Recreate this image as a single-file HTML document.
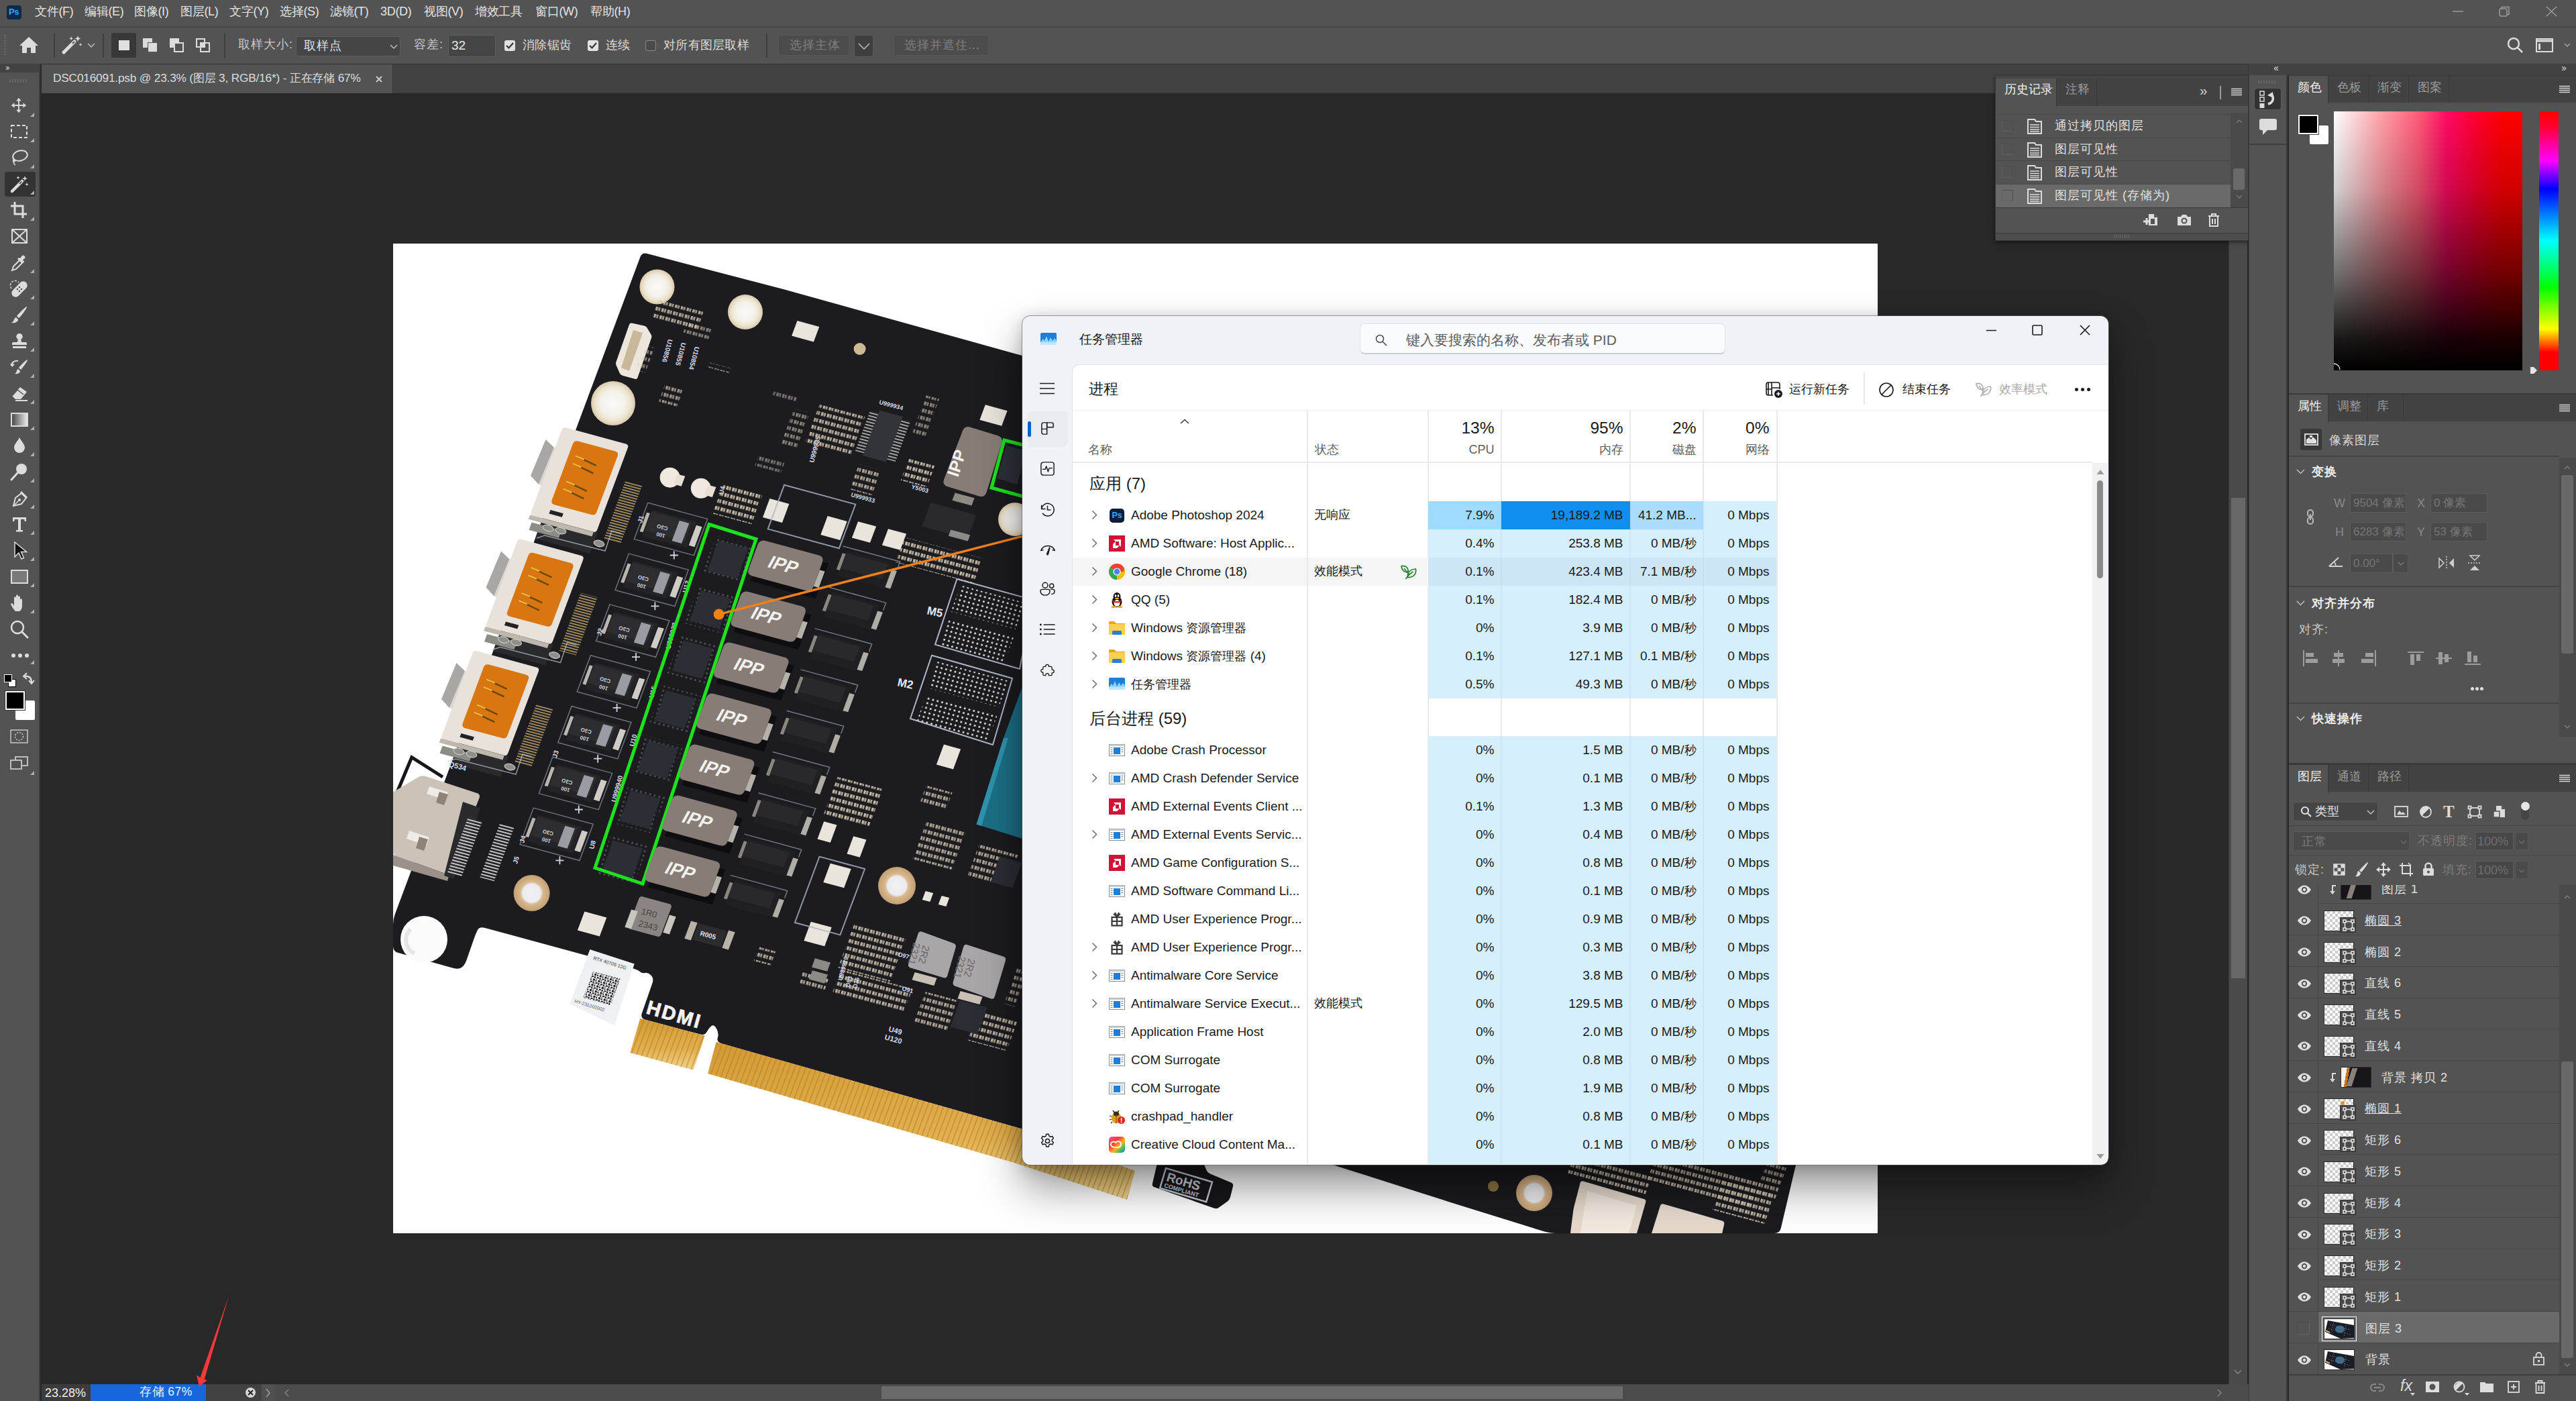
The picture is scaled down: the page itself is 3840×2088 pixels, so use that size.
<!DOCTYPE html><html><head><meta charset="utf-8"><title>Photoshop</title><style>
*{box-sizing:border-box;margin:0;padding:0}
html,body{width:3840px;height:2088px;overflow:hidden;background:#282828}
body{font-family:"Liberation Sans",sans-serif;color:#d8d8d8;position:relative;font-size:18px}
.abs{position:absolute}
svg{position:absolute;overflow:visible}
.t{position:absolute;white-space:nowrap;line-height:1}
/* PS chrome */
#menubar{left:0;top:0;width:3840px;height:41px;background:#535353;border-bottom:1.500px solid #333}
#menubar .t{top:8px;font-size:18px;color:#e4e4e4;letter-spacing:-.3px}
#optbar{left:0;top:41px;width:3840px;height:54.500px;background:#535353;border-top:1px solid #5b5b5b;border-bottom:1.500px solid #343434}
#tabstrip{left:62px;top:95.500px;width:3290px;height:43px;background:#424242;border-bottom:1px solid #383838}
#doctab{left:62px;top:95.500px;width:524px;height:43px;background:#535353;border-right:1px solid #383838}
#doctab .t{left:17px;top:12px;font-size:17.300px;color:#dcdcdc;letter-spacing:-.2px}
#toolbar{left:0;top:95px;width:60px;height:1993px;background:#535353;border-right:2px solid #3e3e3e}
#toolhead{left:0;top:95px;width:58px;height:13px;background:#424242}
#statusbar{left:62px;top:2063px;width:3260px;height:25px;background:#4b4b4b}
#vscroll{left:3322px;top:137px;width:28px;height:1926px;background:#4a4a4a;border-left:1px solid #3a3a3a}

.ptab{position:absolute;font-size:17.500px;line-height:1;white-space:nowrap}
.phead{position:absolute;background:#424242}
.pbody{position:absolute;background:#535353}
.dim{color:#9a9a9a}
.lrow{position:absolute;left:3412px;width:403px;height:46.750px;border-bottom:1px solid #454545}
.lname{position:absolute;left:113px;top:15.500px;font-size:18px;color:#e0e0e0;white-space:nowrap;letter-spacing:1px;line-height:1}
.thumb{position:absolute;left:52px;top:9.500px;width:45px;height:31px;border:1px solid #2c2c2c;background-color:#fff;background-image:linear-gradient(45deg,#ccc 25%,transparent 25%,transparent 75%,#ccc 75%),linear-gradient(45deg,#ccc 25%,transparent 25%,transparent 75%,#ccc 75%);background-size:8px 8px;background-position:0 0,4px 4px}
.vbadge{position:absolute;left:76px;top:19.500px;width:24px;height:23px;background:#4a4a4a;border:1px solid #333}

#tm{position:absolute;left:1524px;top:471px;width:1619px;height:1265px;background:#eff3f8;border-radius:12px;box-shadow:0 0 0 1px rgba(90,90,90,.55),0 34px 64px rgba(0,0,0,.42),0 4px 24px rgba(0,0,0,.2);overflow:hidden;color:#1a1a1a}
#tm .t{color:#1a1a1a}
#tmc{position:absolute;left:74px;top:72px;width:1544px;height:1192px;background:#fff;border-top-left-radius:11px;border-left:1px solid #e3e6ea;border-top:1px solid #e3e6ea;overflow:hidden}
.vl{position:absolute;top:68px;width:2px;height:1130px;background:#e9e9e9}
.cell{position:absolute;height:42px}
.num{position:absolute;font-size:19px;line-height:41px;white-space:nowrap;text-align:right;color:#1a1a1a}
.nm{position:absolute;left:87px;font-size:19px;line-height:41px;white-space:nowrap;color:#1a1a1a}
.st{position:absolute;left:360px;font-size:19px;line-height:41px;white-space:nowrap;color:#1a1a1a}
.chev{position:absolute;left:28px}
</style></head><body><div class="abs" style="left:586px;top:363px;width:2213px;height:1475px;background:#fff"></div><svg style="left:586px;top:363px" width="2213" height="1475" viewBox="586 363 2213 1475"><defs><clipPath id="cv"><rect x="586" y="363" width="2213" height="1475"/></clipPath><linearGradient id="gold" x1="0" y1="0" x2="0" y2="1"><stop offset="0" stop-color="#d39a35"/><stop offset="0.6" stop-color="#e3b04e"/><stop offset="1" stop-color="#efd58e"/></linearGradient><radialGradient id="hole"><stop offset="0" stop-color="#fbfaf8"/><stop offset="0.55" stop-color="#f4f1ea"/><stop offset="0.8" stop-color="#ece3cf"/><stop offset="1" stop-color="#d8c9a6"/></radialGradient><radialGradient id="hole2"><stop offset="0" stop-color="#f2f2f5"/><stop offset="0.5" stop-color="#ececf0"/><stop offset="0.62" stop-color="#d9b98f"/><stop offset="1" stop-color="#c39f72"/></radialGradient><pattern id="dots" width="7" height="7" patternUnits="userSpaceOnUse" patternTransform="rotate(15)"><circle cx="3.5" cy="3.5" r="1.5" fill="#e8e8ee"/></pattern><pattern id="pads" width="9" height="11" patternUnits="userSpaceOnUse" patternTransform="rotate(15)"><rect x="1" y="1" width="3.400" height="5.500" fill="#d9cdb8"/><rect x="5.300" y="1" width="2.600" height="5.500" fill="#cbbfa8"/></pattern><pattern id="fing" width="7.6" height="10" patternUnits="userSpaceOnUse" patternTransform="rotate(20.400)"><rect x="0" y="0" width="1.600" height="10" fill="#a9741f" opacity=".5"/></pattern><pattern id="qr" width="8" height="8" patternUnits="userSpaceOnUse" patternTransform="rotate(17)"><rect width="8" height="8" fill="#f2f2f4"/><rect x="0" y="0" width="3" height="3" fill="#1c1c1c"/><rect x="4" y="1" width="2" height="2" fill="#1c1c1c"/><rect x="1" y="4" width="2" height="3" fill="#1c1c1c"/><rect x="5" y="4" width="3" height="2" fill="#1c1c1c"/><rect x="4" y="6.500" width="1.500" height="1.500" fill="#1c1c1c"/></pattern><pattern id="pins" width="4" height="4" patternUnits="userSpaceOnUse" patternTransform="rotate(15)"><rect x="0" y="0" width="4" height="1.6" fill="#b9a06a"/></pattern><pattern id="pinsw" width="4.6" height="4.6" patternUnits="userSpaceOnUse" patternTransform="rotate(15)"><rect x="0" y="0" width="4.6" height="2" fill="#c8c8cc"/></pattern><linearGradient id="shd" x1="0" y1="0" x2="0" y2="1"><stop offset="0" stop-color="#a9a9a9"/><stop offset="0.35" stop-color="#d6d6d6"/><stop offset="1" stop-color="#ffffff"/></linearGradient></defs><g clip-path="url(#cv)"><path d="M954.2,383.5 Q957.0,376.0 964.7,378.0 L1152.3,427.0 Q1160.0,429.0 1167.7,431.1 L1516.3,527.9 Q1524.0,530.0 1531.7,532.1 L2791.3,877.9 Q2799.0,880.0 2799.0,888.0 L2799.0,1392.0 Q2799.0,1400.0 2796.3,1407.5 L2679.7,1728.5 Q2677.0,1736.0 2675.2,1743.8 L2654.8,1830.2 Q2653.0,1838.0 2645.0,1838.0 L2318.0,1838.0 Q2310.0,1838.0 2302.4,1835.6 L2157.6,1790.4 Q2150.0,1788.0 2142.4,1785.6 L1994.6,1738.4 Q1987.0,1736.0 1979.6,1732.9 L1907.4,1703.1 Q1900.0,1700.0 1892.1,1701.2 L1699.9,1729.8 Q1692.0,1731.0 1684.3,1728.8 L1532.7,1685.2 Q1525.0,1683.0 1517.3,1680.8 L1075.5,1555.2 Q1067.8,1553.0 1069.9,1546.5 L1069.9,1546.5 Q1072.0,1540.0 1068.0,1533.1 L1068.0,1532.9 Q1064.0,1526.0 1060.0,1529.5 L1060.0,1529.5 Q1056.0,1533.0 1053.3,1538.2 L1053.3,1538.2 Q1050.7,1543.4 1043.0,1541.3 L962.0,1519.8 Q954.3,1517.7 956.9,1510.1 L972.4,1465.6 Q975.0,1458.0 970.5,1453.5 L970.5,1453.5 Q966.0,1449.0 961.5,1450.0 L961.5,1450.0 Q957.0,1451.0 954.5,1448.5 L954.5,1448.5 Q952.0,1446.0 944.5,1443.5 L944.5,1443.5 Q937.0,1441.0 929.3,1438.9 L722.2,1382.8 Q714.5,1380.7 711.8,1386.3 L711.8,1386.3 Q709.0,1392.0 706.4,1399.6 L695.6,1430.4 Q693.0,1438.0 688.5,1441.5 L688.5,1441.5 Q684.0,1445.0 676.3,1442.9 L593.7,1420.1 Q586.0,1418.0 586.0,1410.0 L586.0,1378.0 Q586.0,1370.0 588.8,1362.5 Z" fill="#1b1b20" /><clipPath id="pc"><path d="M954.2,383.5 Q957.0,376.0 964.7,378.0 L1152.3,427.0 Q1160.0,429.0 1167.7,431.1 L1516.3,527.9 Q1524.0,530.0 1531.7,532.1 L2791.3,877.9 Q2799.0,880.0 2799.0,888.0 L2799.0,1392.0 Q2799.0,1400.0 2796.3,1407.5 L2679.7,1728.5 Q2677.0,1736.0 2675.2,1743.8 L2654.8,1830.2 Q2653.0,1838.0 2645.0,1838.0 L2318.0,1838.0 Q2310.0,1838.0 2302.4,1835.6 L2157.6,1790.4 Q2150.0,1788.0 2142.4,1785.6 L1994.6,1738.4 Q1987.0,1736.0 1979.6,1732.9 L1907.4,1703.1 Q1900.0,1700.0 1892.1,1701.2 L1699.9,1729.8 Q1692.0,1731.0 1684.3,1728.8 L1532.7,1685.2 Q1525.0,1683.0 1517.3,1680.8 L1075.5,1555.2 Q1067.8,1553.0 1069.9,1546.5 L1069.9,1546.5 Q1072.0,1540.0 1068.0,1533.1 L1068.0,1532.9 Q1064.0,1526.0 1060.0,1529.5 L1060.0,1529.5 Q1056.0,1533.0 1053.3,1538.2 L1053.3,1538.2 Q1050.7,1543.4 1043.0,1541.3 L962.0,1519.8 Q954.3,1517.7 956.9,1510.1 L972.4,1465.6 Q975.0,1458.0 970.5,1453.5 L970.5,1453.5 Q966.0,1449.0 961.5,1450.0 L961.5,1450.0 Q957.0,1451.0 954.5,1448.5 L954.5,1448.5 Q952.0,1446.0 944.5,1443.5 L944.5,1443.5 Q937.0,1441.0 929.3,1438.9 L722.2,1382.8 Q714.5,1380.7 711.8,1386.3 L711.8,1386.3 Q709.0,1392.0 706.4,1399.6 L695.6,1430.4 Q693.0,1438.0 688.5,1441.5 L688.5,1441.5 Q684.0,1445.0 676.3,1442.9 L593.7,1420.1 Q586.0,1418.0 586.0,1410.0 L586.0,1378.0 Q586.0,1370.0 588.8,1362.5 Z"  /></clipPath><polygon points="1067.8,1553.0 1525.0,1683.0 1692.0,1745.0 1680.0,1788.0 1512.0,1733.0 1055.0,1600.0" fill="url(#gold)" /><polygon points="1067.8,1553.0 1525.0,1683.0 1692.0,1745.0 1680.0,1788.0 1512.0,1733.0 1055.0,1600.0" fill="url(#fing)" /><polygon points="954.3,1517.7 1050.7,1543.4 1033.5,1594.8 939.3,1569.0" fill="url(#gold)" /><polygon points="954.3,1517.7 1050.7,1543.4 1033.5,1594.8 939.3,1569.0" fill="url(#fing)" /><path d="M1724.9,1733.9 Q1725.8,1730.0 1729.8,1730.0 L1788.7,1730.0 Q1792.7,1730.0 1794.2,1733.7 L1798.5,1744.1 Q1800.0,1747.8 1803.7,1749.3 L1835.3,1762.5 Q1839.0,1764.0 1838.0,1767.9 L1834.0,1784.1 Q1833.0,1788.0 1829.8,1790.4 L1817.2,1799.6 Q1814.0,1802.0 1810.2,1800.7 L1720.8,1769.3 Q1717.0,1768.0 1717.9,1764.1 Z" fill="#17171a" /><g transform="translate(1738,1741) rotate(16.600)"><rect x="0" y="0" width="72" height="31" fill="none" stroke="#c9ccd6" stroke-width="2.5"/><text x="5" y="18" font-family="Liberation Sans" font-weight="bold" font-size="19" fill="#c9ccd6">RoHS</text><text x="5" y="28" font-family="Liberation Sans" font-weight="bold" font-size="9" fill="#c9ccd6">COMPLIANT</text></g><path d="M586,1195 L613.800,1128.600 L660,1158" fill="none" stroke="#17171a" stroke-width="5"/><circle cx="979.5" cy="427.5" r="26" fill="url(#hole)"/><circle cx="1111" cy="465" r="26" fill="url(#hole)"/><circle cx="914" cy="601" r="33" fill="url(#hole)"/><circle cx="792.600" cy="1331" r="27" fill="url(#hole2)"/><circle cx="1337" cy="1320" r="28" fill="url(#hole2)"/><circle cx="1513" cy="774" r="25" fill="url(#hole)"/><circle cx="632" cy="1400" r="35" fill="#fbfbfb"/><path d="M612,1385 a22 22 0 0 0 6 36" stroke="#e6e6e6" stroke-width="6" fill="none"/><circle cx="2287" cy="1778" r="27" fill="url(#hole2)"/><circle cx="2226" cy="1768" r="8" fill="#8a7440"/><circle cx="1281.600" cy="520" r="9" fill="#cbb994"/><path d="M938.0,483.8 Q939.0,481.0 941.9,481.6 L960.1,485.4 Q963.0,486.0 964.5,488.6 L970.5,498.4 Q972.0,501.0 971.0,503.8 L950.5,562.8 Q949.5,565.6 946.6,564.8 L927.9,559.8 Q925.0,559.0 923.8,556.3 L918.7,544.7 Q917.5,542.0 918.5,539.2 Z" fill="#ece6dc" /><polygon points="944.0,492.0 958.0,496.0 938.0,553.0 926.0,548.0" fill="#c9b79a" /><polygon points="981.4,446.8 1049.0,465.1 1038.6,493.2 971.0,474.9" fill="url(#pads)" opacity="0.8"/><polygon points="1023.5,480.3 1062.1,490.7 1056.5,505.7 1017.9,495.3" fill="url(#pads)" opacity="0.6"/><polygon points="991.0,574.2 1018.1,581.5 1009.0,605.8 981.9,598.5" fill="url(#pads)" opacity="0.7"/><polygon points="962.2,514.4 975.7,518.1 961.8,555.6 948.3,551.9" fill="url(#pads)" opacity="0.6"/><polygon points="1057.0,539.8 1089.8,548.7 1087.0,556.2 1054.2,547.3" fill="url(#pads)" opacity="0.6"/><text x="996" y="505" transform="rotate(105 996 505)" font-family="Liberation Sans" font-weight="bold" font-size="10" fill="#d6dbe6">U10856</text><text x="1016" y="510" transform="rotate(105 1016 510)" font-family="Liberation Sans" font-weight="bold" font-size="10" fill="#d6dbe6">U10855</text><text x="1036" y="516" transform="rotate(105 1036 516)" font-family="Liberation Sans" font-weight="bold" font-size="10" fill="#d6dbe6">U10854</text><polygon points="1188.5,478.1 1221.3,487.0 1212.9,509.5 1180.1,500.6" fill="#e9e4dc" /><polygon points="1468.8,603.3 1501.6,612.2 1493.2,634.7 1460.4,625.8" fill="#e9e4dc" /><polygon points="1147.4,743.0 1176.4,750.9 1166.0,779.0 1137.0,771.1" fill="#e9e4dc" /><polygon points="1233.7,769.0 1262.7,776.9 1252.3,805.0 1223.3,797.1" fill="#e9e4dc" /><polygon points="1279.0,777.2 1306.1,784.5 1297.0,808.8 1269.9,801.5" fill="#e9e4dc" /><polygon points="1324.0,788.2 1351.1,795.5 1342.0,819.8 1314.9,812.5" fill="#e9e4dc" /><polygon points="871.4,1358.5 904.3,1367.4 893.8,1395.5 860.9,1386.6" fill="#e9e4dc" /><polygon points="1407.0,1109.6 1432.1,1116.4 1421.0,1146.4 1395.9,1139.6" fill="#e9e4dc" /><polygon points="1228.2,1224.3 1247.5,1229.5 1237.8,1255.7 1218.5,1250.5" fill="#e9e4dc" /><polygon points="1272.2,1246.3 1291.5,1251.5 1281.8,1277.7 1262.5,1272.5" fill="#e9e4dc" /><polygon points="1237.8,1286.8 1268.7,1295.1 1258.2,1323.2 1227.3,1314.9" fill="#e9e4dc" /><polygon points="1208.8,1373.8 1239.7,1382.1 1229.2,1410.2 1198.3,1401.9" fill="#e9e4dc" /><polygon points="1379.6,1327.9 1391.2,1331.0 1386.4,1344.1 1374.8,1341.0" fill="#e9e4dc" /><polygon points="1403.6,1334.9 1415.2,1338.0 1410.4,1351.1 1398.8,1348.0" fill="#e9e4dc" /><circle cx="998.7" cy="711.7" r="15" fill="#efe9df"/><polygon points="1009.7,706.6 1021.3,709.8 1015.7,724.8 1004.1,721.6" fill="#e6dfd2" /><circle cx="1044.8" cy="727.8" r="15" fill="#efe9df"/><polygon points="1055.8,722.7 1067.4,725.9 1061.8,740.9 1050.2,737.7" fill="#e6dfd2" /><polygon points="788.8,765.3 891.2,793.1 879.4,824.9 777.0,797.2" fill="#2a2a2d" clip-path="url(#pc)"/><polygon points="792.6,778.5 837.1,790.6 832.9,801.8 788.5,789.8" fill="#8d8d88" /><polygon points="932.2,717.0 957.3,723.8 925.2,810.0 900.1,803.2" fill="url(#pins)" /><polygon points="813.5,655.0 826.0,667.0 803.0,722.0 791.0,709.0" fill="#a9a6a3" /><polygon points="826.0,667.0 842.0,672.0 820.0,728.0 803.0,722.0" fill="#d9d6d2" /><path d="M837.3,640.7 Q839.0,636.0 843.8,637.3 L932.7,661.4 Q937.5,662.7 935.8,667.4 L890.4,789.2 Q888.7,793.9 883.8,792.6 L795.0,768.5 Q790.1,767.2 791.9,762.5 Z" fill="#e8e2da" /><polygon points="790.1,767.2 884.8,792.9 882.4,799.4 787.7,773.7" fill="#bdb7ae" /><path d="M853.9,661.6 Q856.0,656.0 861.8,657.6 L916.9,672.5 Q922.7,674.1 920.6,679.7 L889.5,763.1 Q887.4,768.7 881.6,767.1 L826.5,752.2 Q820.8,750.6 822.8,745.0 Z" fill="#d9760f" /><path d="M857.9,679.4 l30.8,14.5" stroke="#6a4a12" stroke-width="2.5"/><path d="M857.9,679.4 l12.8,5.5" stroke="#f0b637" stroke-width="2.5"/><path d="M853.7,690.8 l30.8,14.5" stroke="#6a4a12" stroke-width="2.5"/><path d="M853.7,690.8 l12.8,5.5" stroke="#f0b637" stroke-width="2.5"/><path d="M843.8,717.3 l30.8,14.5" stroke="#6a4a12" stroke-width="2.5"/><path d="M843.8,717.3 l12.8,5.5" stroke="#f0b637" stroke-width="2.5"/><path d="M839.6,728.7 l30.8,14.5" stroke="#6a4a12" stroke-width="2.5"/><path d="M839.6,728.7 l12.8,5.5" stroke="#f0b637" stroke-width="2.5"/><polygon points="820.5,759.9 839.8,765.2 837.7,770.8 818.4,765.6" fill="#222" /><polygon points="722.3,931.8 824.7,959.6 812.9,991.4 710.5,963.7" fill="#2a2a2d" clip-path="url(#pc)"/><polygon points="726.1,945.0 770.6,957.1 766.4,968.3 722.0,956.3" fill="#8d8d88" /><polygon points="865.7,883.5 890.8,890.3 858.7,976.5 833.6,969.7" fill="url(#pins)" /><polygon points="747.0,821.5 759.5,833.5 736.5,888.5 724.5,875.5" fill="#a9a6a3" /><polygon points="759.5,833.5 775.5,838.5 753.5,894.5 736.5,888.5" fill="#d9d6d2" /><path d="M770.8,807.2 Q772.5,802.5 777.3,803.8 L866.2,827.9 Q871.0,829.2 869.3,833.9 L823.9,955.7 Q822.2,960.4 817.3,959.1 L728.5,935.0 Q723.6,933.7 725.4,929.0 Z" fill="#e8e2da" /><polygon points="723.6,933.7 818.3,959.4 815.9,965.9 721.2,940.2" fill="#bdb7ae" /><path d="M787.4,828.1 Q789.5,822.5 795.3,824.1 L850.4,839.0 Q856.2,840.6 854.1,846.2 L823.0,929.6 Q820.9,935.2 815.1,933.6 L760.0,918.7 Q754.3,917.1 756.3,911.5 Z" fill="#d9760f" /><path d="M791.4,845.9 l30.8,14.5" stroke="#6a4a12" stroke-width="2.5"/><path d="M791.4,845.9 l12.8,5.5" stroke="#f0b637" stroke-width="2.5"/><path d="M787.2,857.3 l30.8,14.5" stroke="#6a4a12" stroke-width="2.5"/><path d="M787.2,857.3 l12.8,5.5" stroke="#f0b637" stroke-width="2.5"/><path d="M777.3,883.8 l30.8,14.5" stroke="#6a4a12" stroke-width="2.5"/><path d="M777.3,883.8 l12.8,5.5" stroke="#f0b637" stroke-width="2.5"/><path d="M773.1,895.2 l30.8,14.5" stroke="#6a4a12" stroke-width="2.5"/><path d="M773.1,895.2 l12.8,5.5" stroke="#f0b637" stroke-width="2.5"/><polygon points="754.0,926.4 773.3,931.7 771.2,937.3 751.9,932.1" fill="#222" /><polygon points="655.8,1098.3 758.2,1126.1 746.4,1157.9 644.0,1130.2" fill="#2a2a2d" clip-path="url(#pc)"/><polygon points="659.6,1111.5 704.1,1123.6 699.9,1134.8 655.5,1122.8" fill="#8d8d88" /><polygon points="799.2,1050.0 824.3,1056.8 792.2,1143.0 767.1,1136.2" fill="url(#pins)" /><polygon points="680.5,988.0 693.0,1000.0 670.0,1055.0 658.0,1042.0" fill="#a9a6a3" /><polygon points="693.0,1000.0 709.0,1005.0 687.0,1061.0 670.0,1055.0" fill="#d9d6d2" /><path d="M704.3,973.7 Q706.0,969.0 710.8,970.3 L799.7,994.4 Q804.5,995.7 802.8,1000.4 L757.4,1122.2 Q755.7,1126.9 750.8,1125.6 L662.0,1101.5 Q657.1,1100.2 658.9,1095.5 Z" fill="#e8e2da" /><polygon points="657.1,1100.2 751.8,1125.9 749.4,1132.4 654.7,1106.7" fill="#bdb7ae" /><path d="M720.9,994.6 Q723.0,989.0 728.8,990.6 L783.9,1005.5 Q789.7,1007.1 787.6,1012.7 L756.5,1096.1 Q754.4,1101.7 748.6,1100.1 L693.5,1085.2 Q687.8,1083.6 689.8,1078.0 Z" fill="#d9760f" /><path d="M724.9,1012.4 l30.8,14.5" stroke="#6a4a12" stroke-width="2.5"/><path d="M724.9,1012.4 l12.8,5.5" stroke="#f0b637" stroke-width="2.5"/><path d="M720.7,1023.8 l30.8,14.5" stroke="#6a4a12" stroke-width="2.5"/><path d="M720.7,1023.8 l12.8,5.5" stroke="#f0b637" stroke-width="2.5"/><path d="M710.8,1050.3 l30.8,14.5" stroke="#6a4a12" stroke-width="2.5"/><path d="M710.8,1050.3 l12.8,5.5" stroke="#f0b637" stroke-width="2.5"/><path d="M706.6,1061.7 l30.8,14.5" stroke="#6a4a12" stroke-width="2.5"/><path d="M706.6,1061.7 l12.8,5.5" stroke="#f0b637" stroke-width="2.5"/><polygon points="687.5,1092.9 706.8,1098.2 704.7,1103.8 685.4,1098.6" fill="#222" /><text x="1024" y="884" transform="rotate(-75 1024 884)" font-family="Liberation Sans" font-weight="bold" font-size="10" fill="#d6dbe6">U12</text><text x="974" y="1041" transform="rotate(-75 974 1041)" font-family="Liberation Sans" font-weight="bold" font-size="10" fill="#d6dbe6">U15</text><text x="945" y="1113" transform="rotate(-75 945 1113)" font-family="Liberation Sans" font-weight="bold" font-size="10" fill="#d6dbe6">U10</text><text x="885" y="1266" transform="rotate(-75 885 1266)" font-family="Liberation Sans" font-weight="bold" font-size="10" fill="#d6dbe6">U8</text><text x="999" y="968" transform="rotate(-75 999 968)" font-family="Liberation Sans" font-weight="bold" font-size="10" fill="#d6dbe6">U999938</text><text x="918" y="1196" transform="rotate(-75 918 1196)" font-family="Liberation Sans" font-weight="bold" font-size="10" fill="#d6dbe6">U999940</text><text x="957" y="780" transform="rotate(-75 957 780)" font-family="Liberation Sans" font-weight="bold" font-size="10" fill="#d6dbe6">J1</text><text x="896" y="948" transform="rotate(-75 896 948)" font-family="Liberation Sans" font-weight="bold" font-size="10" fill="#d6dbe6">J2</text><text x="830" y="1130" transform="rotate(-75 830 1130)" font-family="Liberation Sans" font-weight="bold" font-size="10" fill="#d6dbe6">J3</text><text x="781" y="1257" transform="rotate(-75 781 1257)" font-family="Liberation Sans" font-weight="bold" font-size="10" fill="#d6dbe6">J4</text><text x="771" y="1288" transform="rotate(-75 771 1288)" font-family="Liberation Sans" font-weight="bold" font-size="10" fill="#d6dbe6">J5</text><text x="1078" y="738" transform="rotate(-75 1078 738)" font-family="Liberation Sans" font-weight="bold" font-size="10" fill="#d6dbe6">U4</text><text x="1213" y="690" transform="rotate(-75 1213 690)" font-family="Liberation Sans" font-weight="bold" font-size="10" fill="#d6dbe6">U999935</text><text x="668" y="1142" transform="rotate(15 668 1142)" font-family="Liberation Sans" font-weight="bold" font-size="11" fill="#d6dbe6">Q534</text><ellipse cx="817.0" cy="787.0" rx="8" ry="4.500" transform="rotate(15 817.0 787.0)" fill="#8f8f8a" stroke="#c9c9c4" stroke-width="1.200"/><ellipse cx="836.0" cy="791.0" rx="8" ry="4.500" transform="rotate(15 836.0 791.0)" fill="#8f8f8a" stroke="#c9c9c4" stroke-width="1.200"/><ellipse cx="893.0" cy="810.0" rx="8" ry="4.500" transform="rotate(15 893.0 810.0)" fill="#8f8f8a" stroke="#c9c9c4" stroke-width="1.200"/><path d="M800.0,802.0 l12,-4 l90,23 l10,-30 l14,4" fill="none" stroke="#c2c8d4" stroke-width="1.500" opacity=".7"/><ellipse cx="750.5" cy="953.5" rx="8" ry="4.500" transform="rotate(15 750.5 953.5)" fill="#8f8f8a" stroke="#c9c9c4" stroke-width="1.200"/><ellipse cx="769.5" cy="957.5" rx="8" ry="4.500" transform="rotate(15 769.5 957.5)" fill="#8f8f8a" stroke="#c9c9c4" stroke-width="1.200"/><ellipse cx="826.5" cy="976.5" rx="8" ry="4.500" transform="rotate(15 826.5 976.5)" fill="#8f8f8a" stroke="#c9c9c4" stroke-width="1.200"/><path d="M733.5,968.5 l12,-4 l90,23 l10,-30 l14,4" fill="none" stroke="#c2c8d4" stroke-width="1.500" opacity=".7"/><ellipse cx="684.0" cy="1120.0" rx="8" ry="4.500" transform="rotate(15 684.0 1120.0)" fill="#8f8f8a" stroke="#c9c9c4" stroke-width="1.200"/><ellipse cx="703.0" cy="1124.0" rx="8" ry="4.500" transform="rotate(15 703.0 1124.0)" fill="#8f8f8a" stroke="#c9c9c4" stroke-width="1.200"/><ellipse cx="760.0" cy="1143.0" rx="8" ry="4.500" transform="rotate(15 760.0 1143.0)" fill="#8f8f8a" stroke="#c9c9c4" stroke-width="1.200"/><path d="M667.0,1135.0 l12,-4 l90,23 l10,-30 l14,4" fill="none" stroke="#c2c8d4" stroke-width="1.500" opacity=".7"/><path d="M623.8,1158.1 Q629.0,1155.0 634.7,1156.9 L710.9,1182.1 Q716.6,1184.0 714.4,1189.6 L671.7,1298.4 Q669.5,1304.0 663.9,1302.0 L591.6,1276.0 Q586.0,1274.0 584.9,1268.1 L571.1,1195.9 Q570.0,1190.0 575.2,1186.9 Z" fill="#cbc2b8" /><polygon points="586.0,1274.0 669.5,1304.0 667.0,1313.0 586.0,1290.0" fill="#9a928a" /><polygon points="690.0,1195.0 716.0,1204.0 676.0,1310.0 662.0,1305.0" fill="#2a2a2e" /><polygon points="697.7,1217.9 719.0,1223.7 688.3,1306.1 667.0,1300.3" fill="url(#pinsw)" /><polygon points="745.4,1226.8 766.6,1232.6 736.6,1313.2 715.4,1307.4" fill="url(#pinsw)" /><polygon points="640.0,1172.0 668.0,1181.0 664.0,1192.0 636.0,1183.0" fill="#efece8" /><polygon points="610.0,1238.0 640.0,1248.0 636.0,1260.0 606.0,1250.0" fill="#efece8" /><polygon points="655.0,1180.0 668.0,1184.0 662.0,1200.0 650.0,1196.0" fill="#8d8378" /><polygon points="625.0,1247.0 638.0,1251.0 632.0,1268.0 620.0,1264.0" fill="#8d8378" /><path d="M965.7,749.3 L1054.6,773.4 L1034.3,827.7 L945.4,803.6 Z" fill="none" stroke="#c2c8d4" stroke-width="1.500" opacity=".5"/><polygon points="972.5,759.9 1038.2,777.7 1023.5,817.1 957.8,799.3" fill="#242428" /><polygon points="971.3,762.3 1031.2,778.6 1020.7,806.7 960.8,790.4" fill="#2c2c31" /><polygon points="1012.8,776.0 1027.3,779.9 1016.1,809.9 1001.6,806.0" fill="#9a9ca3" /><polygon points="1037.9,782.8 1046.6,785.2 1035.4,815.2 1026.7,812.8" fill="#cfccc6" /><polygon points="964.1,763.8 968.9,765.1 958.5,793.3 953.6,791.9" fill="#b9b6b0" /><text x="992.0" y="796.5" transform="rotate(195 992.0 796.5)" font-family="Liberation Sans" font-weight="bold" font-size="8" fill="#cfd3dc">100</text><text x="996.0" y="785.5" transform="rotate(195 996.0 785.5)" font-family="Liberation Sans" font-weight="bold" font-size="8" fill="#cfd3dc">C3O</text><path d="M998.8,827.5 h12 M1004.8,821.5 v12" stroke="#d0d5e0" stroke-width="1.800"/><path d="M937.3,825.1 L1026.2,849.2 L1005.9,903.5 L917.0,879.4 Z" fill="none" stroke="#c2c8d4" stroke-width="1.500" opacity=".5"/><polygon points="944.1,835.7 1009.8,853.5 995.1,892.9 929.4,875.1" fill="#242428" /><polygon points="942.9,838.1 1002.8,854.4 992.3,882.5 932.4,866.2" fill="#2c2c31" /><polygon points="984.4,851.8 998.9,855.7 987.7,885.7 973.2,881.8" fill="#9a9ca3" /><polygon points="1009.5,858.6 1018.2,861.0 1007.0,891.0 998.3,888.6" fill="#cfccc6" /><polygon points="935.7,839.6 940.5,840.9 930.1,869.1 925.2,867.7" fill="#b9b6b0" /><text x="963.6" y="872.3" transform="rotate(195 963.6 872.3)" font-family="Liberation Sans" font-weight="bold" font-size="8" fill="#cfd3dc">100</text><text x="967.6" y="861.3" transform="rotate(195 967.6 861.3)" font-family="Liberation Sans" font-weight="bold" font-size="8" fill="#cfd3dc">C3O</text><path d="M970.4,903.3 h12 M976.4,897.3 v12" stroke="#d0d5e0" stroke-width="1.800"/><path d="M908.9,900.9 L997.8,925.0 L977.5,979.3 L888.6,955.2 Z" fill="none" stroke="#c2c8d4" stroke-width="1.500" opacity=".5"/><polygon points="915.7,911.5 981.4,929.3 966.7,968.7 901.0,950.9" fill="#242428" /><polygon points="914.5,913.9 974.4,930.2 963.9,958.3 904.0,942.0" fill="#2c2c31" /><polygon points="956.0,927.6 970.5,931.5 959.3,961.5 944.8,957.6" fill="#9a9ca3" /><polygon points="981.1,934.4 989.8,936.8 978.6,966.8 969.9,964.4" fill="#cfccc6" /><polygon points="907.3,915.4 912.1,916.7 901.7,944.9 896.8,943.5" fill="#b9b6b0" /><text x="935.2" y="948.1" transform="rotate(195 935.2 948.1)" font-family="Liberation Sans" font-weight="bold" font-size="8" fill="#cfd3dc">100</text><text x="939.2" y="937.1" transform="rotate(195 939.2 937.1)" font-family="Liberation Sans" font-weight="bold" font-size="8" fill="#cfd3dc">C3O</text><path d="M942.0,979.1 h12 M948.0,973.1 v12" stroke="#d0d5e0" stroke-width="1.800"/><path d="M880.5,976.7 L969.4,1000.8 L949.1,1055.1 L860.2,1031.0 Z" fill="none" stroke="#c2c8d4" stroke-width="1.500" opacity=".5"/><polygon points="887.3,987.3 953.0,1005.1 938.3,1044.5 872.6,1026.7" fill="#242428" /><polygon points="886.1,989.7 946.0,1006.0 935.5,1034.1 875.6,1017.8" fill="#2c2c31" /><polygon points="927.6,1003.4 942.1,1007.3 930.9,1037.3 916.4,1033.4" fill="#9a9ca3" /><polygon points="952.7,1010.2 961.4,1012.6 950.2,1042.6 941.5,1040.2" fill="#cfccc6" /><polygon points="878.9,991.2 883.7,992.5 873.3,1020.7 868.4,1019.3" fill="#b9b6b0" /><text x="906.8" y="1023.9" transform="rotate(195 906.8 1023.9)" font-family="Liberation Sans" font-weight="bold" font-size="8" fill="#cfd3dc">100</text><text x="910.8" y="1012.9" transform="rotate(195 910.8 1012.9)" font-family="Liberation Sans" font-weight="bold" font-size="8" fill="#cfd3dc">C3O</text><path d="M913.6,1054.9 h12 M919.6,1048.9 v12" stroke="#d0d5e0" stroke-width="1.800"/><path d="M852.1,1052.5 L941.0,1076.6 L920.7,1130.9 L831.8,1106.8 Z" fill="none" stroke="#c2c8d4" stroke-width="1.500" opacity=".5"/><polygon points="858.9,1063.1 924.6,1080.9 909.9,1120.3 844.2,1102.5" fill="#242428" /><polygon points="857.7,1065.5 917.6,1081.8 907.1,1109.9 847.2,1093.6" fill="#2c2c31" /><polygon points="899.2,1079.2 913.7,1083.1 902.5,1113.1 888.0,1109.2" fill="#9a9ca3" /><polygon points="924.3,1086.0 933.0,1088.4 921.8,1118.4 913.1,1116.0" fill="#cfccc6" /><polygon points="850.5,1067.0 855.3,1068.3 844.9,1096.5 840.0,1095.1" fill="#b9b6b0" /><text x="878.4" y="1099.7" transform="rotate(195 878.4 1099.7)" font-family="Liberation Sans" font-weight="bold" font-size="8" fill="#cfd3dc">100</text><text x="882.4" y="1088.7" transform="rotate(195 882.4 1088.7)" font-family="Liberation Sans" font-weight="bold" font-size="8" fill="#cfd3dc">C3O</text><path d="M885.2,1130.7 h12 M891.2,1124.7 v12" stroke="#d0d5e0" stroke-width="1.800"/><path d="M823.7,1128.3 L912.6,1152.4 L892.3,1206.7 L803.4,1182.6 Z" fill="none" stroke="#c2c8d4" stroke-width="1.500" opacity=".5"/><polygon points="830.5,1138.9 896.2,1156.7 881.5,1196.1 815.8,1178.3" fill="#242428" /><polygon points="829.3,1141.3 889.2,1157.6 878.7,1185.7 818.8,1169.4" fill="#2c2c31" /><polygon points="870.8,1155.0 885.3,1158.9 874.1,1188.9 859.6,1185.0" fill="#9a9ca3" /><polygon points="895.9,1161.8 904.6,1164.2 893.4,1194.2 884.7,1191.8" fill="#cfccc6" /><polygon points="822.1,1142.8 826.9,1144.1 816.5,1172.3 811.6,1170.9" fill="#b9b6b0" /><text x="850.0" y="1175.5" transform="rotate(195 850.0 1175.5)" font-family="Liberation Sans" font-weight="bold" font-size="8" fill="#cfd3dc">100</text><text x="854.0" y="1164.5" transform="rotate(195 854.0 1164.5)" font-family="Liberation Sans" font-weight="bold" font-size="8" fill="#cfd3dc">C3O</text><path d="M856.8,1206.5 h12 M862.8,1200.5 v12" stroke="#d0d5e0" stroke-width="1.800"/><path d="M795.3,1204.1 L884.2,1228.2 L863.9,1282.5 L775.0,1258.4 Z" fill="none" stroke="#c2c8d4" stroke-width="1.500" opacity=".5"/><polygon points="802.1,1214.7 867.8,1232.5 853.1,1271.9 787.4,1254.1" fill="#242428" /><polygon points="800.9,1217.1 860.8,1233.4 850.3,1261.5 790.4,1245.2" fill="#2c2c31" /><polygon points="842.4,1230.8 856.9,1234.7 845.7,1264.7 831.2,1260.8" fill="#9a9ca3" /><polygon points="867.5,1237.6 876.2,1240.0 865.0,1270.0 856.3,1267.6" fill="#cfccc6" /><polygon points="793.7,1218.6 798.5,1219.9 788.1,1248.1 783.2,1246.7" fill="#b9b6b0" /><text x="821.6" y="1251.3" transform="rotate(195 821.6 1251.3)" font-family="Liberation Sans" font-weight="bold" font-size="8" fill="#cfd3dc">100</text><text x="825.6" y="1240.3" transform="rotate(195 825.6 1240.3)" font-family="Liberation Sans" font-weight="bold" font-size="8" fill="#cfd3dc">C3O</text><path d="M828.4,1282.3 h12 M834.4,1276.3 v12" stroke="#d0d5e0" stroke-width="1.800"/><polygon points="1067.5,798.3 1123.5,813.5 1102.5,869.7 1046.5,854.5" fill="url(#dots)" opacity="0.28"/><polygon points="1071.2,805.5 1115.6,817.5 1098.8,862.5 1054.4,850.5" fill="#2b2e35" /><polygon points="1041.3,872.8 1097.3,888.0 1076.3,944.2 1020.3,929.0" fill="url(#dots)" opacity="0.28"/><polygon points="1045.0,880.0 1089.4,892.0 1072.6,937.0 1028.2,925.0" fill="#2b2e35" /><polygon points="1015.1,947.3 1071.1,962.5 1050.1,1018.7 994.1,1003.5" fill="url(#dots)" opacity="0.28"/><polygon points="1018.8,954.5 1063.2,966.5 1046.4,1011.5 1002.0,999.5" fill="#2b2e35" /><polygon points="988.9,1021.8 1044.9,1037.0 1023.9,1093.2 967.9,1078.0" fill="url(#dots)" opacity="0.28"/><polygon points="992.6,1029.0 1037.0,1041.0 1020.2,1086.0 975.8,1074.0" fill="#2b2e35" /><polygon points="962.7,1096.3 1018.7,1111.5 997.7,1167.7 941.7,1152.5" fill="url(#dots)" opacity="0.28"/><polygon points="966.4,1103.5 1010.8,1115.5 994.0,1160.5 949.6,1148.5" fill="#2b2e35" /><polygon points="936.5,1170.8 992.5,1186.0 971.5,1242.2 915.5,1227.0" fill="url(#dots)" opacity="0.28"/><polygon points="940.2,1178.0 984.6,1190.0 967.8,1235.0 923.4,1223.0" fill="#2b2e35" /><polygon points="910.3,1245.3 966.3,1260.5 945.3,1316.7 889.3,1301.5" fill="url(#dots)" opacity="0.28"/><polygon points="914.0,1252.5 958.4,1264.5 941.6,1309.5 897.2,1297.5" fill="#2b2e35" /><polygon points="1057,781.500 1127,803.500 958,1317 887,1293.500" fill="none" stroke="#1de21d" stroke-width="5"/><polygon points="1138.5,813.7 1235.1,839.9 1215.5,892.3 1118.9,866.1" fill="#0e0e10" /><path d="M1129.3,812.1 Q1132.5,803.7 1141.2,806.0 L1220.4,827.5 Q1229.1,829.9 1225.9,838.3 L1212.7,873.9 Q1209.5,882.3 1200.8,880.0 L1121.6,858.5 Q1112.9,856.1 1116.1,847.7 Z" fill="#877c76" /><polygon points="1221.9,849.4 1229.6,851.5 1220.6,875.9 1212.8,873.8" fill="#b5b2ac" /><text x="-25" y="9" transform="translate(1171.0,843.0) rotate(15) skewX(-14)" font-family="Liberation Sans" font-weight="bold" font-size="27" fill="#f4f2f0">IPP</text><polygon points="1112.9,889.7 1209.5,915.9 1189.9,968.3 1093.3,942.1" fill="#0e0e10" /><path d="M1103.7,888.1 Q1106.9,879.7 1115.6,882.0 L1194.8,903.5 Q1203.5,905.9 1200.3,914.3 L1187.1,949.9 Q1183.9,958.3 1175.2,956.0 L1096.0,934.5 Q1087.3,932.1 1090.5,923.7 Z" fill="#877c76" /><polygon points="1196.3,925.4 1204.0,927.5 1195.0,951.9 1187.2,949.8" fill="#b5b2ac" /><text x="-25" y="9" transform="translate(1145.4,919.0) rotate(15) skewX(-14)" font-family="Liberation Sans" font-weight="bold" font-size="27" fill="#f4f2f0">IPP</text><polygon points="1087.3,965.7 1183.9,991.9 1164.3,1044.3 1067.7,1018.1" fill="#0e0e10" /><path d="M1078.1,964.1 Q1081.3,955.7 1090.0,958.0 L1169.2,979.5 Q1177.9,981.9 1174.7,990.3 L1161.5,1025.9 Q1158.3,1034.3 1149.6,1032.0 L1070.4,1010.5 Q1061.7,1008.1 1064.9,999.7 Z" fill="#877c76" /><polygon points="1170.7,1001.4 1178.4,1003.5 1169.4,1027.9 1161.6,1025.8" fill="#b5b2ac" /><text x="-25" y="9" transform="translate(1119.8,995.0) rotate(15) skewX(-14)" font-family="Liberation Sans" font-weight="bold" font-size="27" fill="#f4f2f0">IPP</text><polygon points="1061.7,1041.7 1158.3,1067.9 1138.7,1120.3 1042.1,1094.1" fill="#0e0e10" /><path d="M1052.5,1040.1 Q1055.7,1031.7 1064.4,1034.0 L1143.6,1055.5 Q1152.3,1057.9 1149.1,1066.3 L1135.9,1101.9 Q1132.7,1110.3 1124.0,1108.0 L1044.8,1086.5 Q1036.1,1084.1 1039.3,1075.7 Z" fill="#877c76" /><polygon points="1145.1,1077.4 1152.8,1079.5 1143.8,1103.9 1136.0,1101.8" fill="#b5b2ac" /><text x="-25" y="9" transform="translate(1094.2,1071.0) rotate(15) skewX(-14)" font-family="Liberation Sans" font-weight="bold" font-size="27" fill="#f4f2f0">IPP</text><polygon points="1036.1,1117.7 1132.7,1143.9 1113.1,1196.3 1016.5,1170.1" fill="#0e0e10" /><path d="M1026.9,1116.1 Q1030.1,1107.7 1038.8,1110.0 L1118.0,1131.5 Q1126.7,1133.9 1123.5,1142.3 L1110.3,1177.9 Q1107.1,1186.3 1098.4,1184.0 L1019.2,1162.5 Q1010.5,1160.1 1013.7,1151.7 Z" fill="#877c76" /><polygon points="1119.5,1153.4 1127.2,1155.5 1118.2,1179.9 1110.4,1177.8" fill="#b5b2ac" /><text x="-25" y="9" transform="translate(1068.6,1147.0) rotate(15) skewX(-14)" font-family="Liberation Sans" font-weight="bold" font-size="27" fill="#f4f2f0">IPP</text><polygon points="1010.5,1193.7 1107.1,1219.9 1087.5,1272.3 990.9,1246.1" fill="#0e0e10" /><path d="M1001.3,1192.1 Q1004.5,1183.7 1013.2,1186.0 L1092.4,1207.5 Q1101.1,1209.9 1097.9,1218.3 L1084.7,1253.9 Q1081.5,1262.3 1072.8,1260.0 L993.6,1238.5 Q984.9,1236.1 988.1,1227.7 Z" fill="#877c76" /><polygon points="1093.9,1229.4 1101.6,1231.5 1092.6,1255.9 1084.8,1253.8" fill="#b5b2ac" /><text x="-25" y="9" transform="translate(1043.0,1223.0) rotate(15) skewX(-14)" font-family="Liberation Sans" font-weight="bold" font-size="27" fill="#f4f2f0">IPP</text><polygon points="984.9,1269.7 1081.5,1295.9 1061.9,1348.3 965.3,1322.1" fill="#0e0e10" /><path d="M975.7,1268.1 Q978.9,1259.7 987.6,1262.0 L1066.8,1283.5 Q1075.5,1285.9 1072.3,1294.3 L1059.1,1329.9 Q1055.9,1338.3 1047.2,1336.0 L968.0,1314.5 Q959.3,1312.1 962.5,1303.7 Z" fill="#877c76" /><polygon points="1068.3,1305.4 1076.0,1307.5 1067.0,1331.9 1059.2,1329.8" fill="#b5b2ac" /><text x="-25" y="9" transform="translate(1017.4,1299.0) rotate(15) skewX(-14)" font-family="Liberation Sans" font-weight="bold" font-size="27" fill="#f4f2f0">IPP</text><path d="M1434.8,642.4 Q1438.0,634.0 1446.6,636.7 L1487.4,649.3 Q1496.0,652.0 1493.3,660.6 L1470.7,733.4 Q1468.0,742.0 1459.4,739.4 L1412.6,725.3 Q1404.0,722.7 1407.2,714.3 Z" fill="#877c76" /><text x="1428" y="712" transform="rotate(-72 1428 712)" font-family="Liberation Sans" font-weight="bold" font-size="25" fill="#f4f2f0">IPP</text><polygon points="1500.0,664.0 1530.0,672.0 1516.0,722.0 1486.0,713.0" fill="#2d3038" /><polygon points="1497,656 1560,672 1540,744 1478,727" fill="none" stroke="#1de21d" stroke-width="5"/><polygon points="1387.5,749.0 1455.1,767.4 1441.9,803.0 1374.3,784.6" fill="#2a2a2c" /><polygon points="1417.3,789.4 1446.2,797.2 1442.7,806.6 1413.8,798.8" fill="#8c8a86" /><polygon points="1423.6,734.4 1452.6,742.3 1448.4,753.6 1419.4,745.7" fill="#8f8b84" /><polygon points="1297.2,611.9 1357.1,628.1 1334.8,688.1 1274.9,671.9" fill="url(#pinsw)" opacity="0.8"/><polygon points="1311.2,611.6 1346.0,621.0 1320.8,688.4 1286.0,679.0" fill="#32343a" /><text x="1310" y="602" transform="rotate(15 1310 602)" font-family="Liberation Sans" font-weight="bold" font-size="9" fill="#d6dbe6">U999934</text><text x="1268" y="740" transform="rotate(15 1268 740)" font-family="Liberation Sans" font-weight="bold" font-size="9" fill="#d6dbe6">U999933</text><text x="1358" y="728" transform="rotate(15 1358 728)" font-family="Liberation Sans" font-weight="bold" font-size="9" fill="#d6dbe6">Y5003</text><polygon points="1221.7,602.7 1289.3,621.1 1268.3,677.3 1200.7,658.9" fill="url(#pads)" opacity="0.85"/><polygon points="1183.9,608.7 1207.1,615.0 1186.1,671.3 1162.9,665.0" fill="url(#pads)" opacity="0.6"/><polygon points="1132.2,675.4 1170.8,685.9 1163.8,704.6 1125.2,694.1" fill="url(#pads)" opacity="0.5"/><polygon points="1280.6,691.8 1313.4,700.7 1299.4,738.2 1266.6,729.3" fill="url(#pads)" opacity="0.8"/><polygon points="1354.6,683.8 1393.3,694.3 1381.4,726.2 1342.7,715.7" fill="url(#pads)" opacity="0.9"/><polygon points="1380.8,589.3 1400.1,594.5 1379.2,650.7 1359.9,645.5" fill="url(#pads)" opacity="0.6"/><polygon points="1154.4,580.6 1189.1,590.0 1185.6,599.4 1150.9,590.0" fill="url(#pads)" opacity="0.5"/><polygon points="1079.7,718.7 1137.7,734.4 1120.3,781.3 1062.3,765.6" fill="url(#pads)" opacity="0.9"/><path d="M1256.7,814.0 l85.0,23.1 l-4.2,11.2" stroke="#aeb6c6" stroke-width="1.500" opacity=".6" fill="none"/><polygon points="1262.7,820.8 1332.3,839.7 1318.3,877.2 1248.7,858.3" fill="#202022" /><polygon points="1261.8,824.4 1323.6,841.1 1315.2,863.6 1253.4,846.9" fill="#29292b" /><polygon points="1329.2,849.1 1336.9,851.1 1327.2,877.4 1319.4,875.3" fill="#b0ada7" /><polygon points="1255.9,824.2 1260.7,825.5 1251.7,849.9 1246.8,848.6" fill="#8a8781" /><path d="M1235.7,875.3 l85.0,23.1 l-4.2,11.2" stroke="#aeb6c6" stroke-width="1.500" opacity=".6" fill="none"/><polygon points="1241.7,882.1 1311.3,901.0 1297.3,938.5 1227.7,919.6" fill="#202022" /><polygon points="1240.8,885.7 1302.6,902.4 1294.2,924.9 1232.4,908.2" fill="#29292b" /><polygon points="1308.2,910.4 1315.9,912.4 1306.2,938.7 1298.4,936.6" fill="#b0ada7" /><polygon points="1234.9,885.5 1239.7,886.8 1230.7,911.2 1225.8,909.9" fill="#8a8781" /><path d="M1214.7,936.6 l85.0,23.1 l-4.2,11.2" stroke="#aeb6c6" stroke-width="1.500" opacity=".6" fill="none"/><polygon points="1220.7,943.4 1290.3,962.3 1276.3,999.8 1206.7,980.9" fill="#202022" /><polygon points="1219.8,947.0 1281.6,963.7 1273.2,986.2 1211.4,969.5" fill="#29292b" /><polygon points="1287.2,971.7 1294.9,973.7 1285.2,1000.0 1277.4,997.9" fill="#b0ada7" /><polygon points="1213.9,946.8 1218.7,948.1 1209.7,972.5 1204.8,971.2" fill="#8a8781" /><path d="M1193.7,997.9 l85.0,23.1 l-4.2,11.2" stroke="#aeb6c6" stroke-width="1.500" opacity=".6" fill="none"/><polygon points="1199.7,1004.7 1269.3,1023.6 1255.3,1061.1 1185.7,1042.2" fill="#202022" /><polygon points="1198.8,1008.3 1260.6,1025.0 1252.2,1047.5 1190.4,1030.8" fill="#29292b" /><polygon points="1266.2,1033.0 1273.9,1035.0 1264.2,1061.3 1256.4,1059.2" fill="#b0ada7" /><polygon points="1192.9,1008.1 1197.7,1009.4 1188.7,1033.8 1183.8,1032.5" fill="#8a8781" /><path d="M1172.7,1059.2 l85.0,23.1 l-4.2,11.2" stroke="#aeb6c6" stroke-width="1.500" opacity=".6" fill="none"/><polygon points="1178.7,1066.0 1248.3,1084.9 1234.3,1122.4 1164.7,1103.5" fill="#202022" /><polygon points="1177.8,1069.6 1239.6,1086.3 1231.2,1108.8 1169.4,1092.1" fill="#29292b" /><polygon points="1245.2,1094.3 1252.9,1096.3 1243.2,1122.6 1235.4,1120.5" fill="#b0ada7" /><polygon points="1171.9,1069.4 1176.7,1070.7 1167.7,1095.1 1162.8,1093.8" fill="#8a8781" /><path d="M1151.7,1120.5 l85.0,23.1 l-4.2,11.2" stroke="#aeb6c6" stroke-width="1.500" opacity=".6" fill="none"/><polygon points="1157.7,1127.3 1227.3,1146.2 1213.3,1183.7 1143.7,1164.8" fill="#202022" /><polygon points="1156.8,1130.9 1218.6,1147.6 1210.2,1170.1 1148.4,1153.4" fill="#29292b" /><polygon points="1224.2,1155.6 1231.9,1157.6 1222.2,1183.9 1214.4,1181.8" fill="#b0ada7" /><polygon points="1150.9,1130.7 1155.7,1132.0 1146.7,1156.4 1141.8,1155.1" fill="#8a8781" /><path d="M1130.7,1181.8 l85.0,23.1 l-4.2,11.2" stroke="#aeb6c6" stroke-width="1.500" opacity=".6" fill="none"/><polygon points="1136.7,1188.6 1206.3,1207.5 1192.3,1245.0 1122.7,1226.1" fill="#202022" /><polygon points="1135.8,1192.2 1197.6,1208.9 1189.2,1231.4 1127.4,1214.7" fill="#29292b" /><polygon points="1203.2,1216.9 1210.9,1218.9 1201.2,1245.2 1193.4,1243.1" fill="#b0ada7" /><polygon points="1129.9,1192.0 1134.7,1193.3 1125.7,1217.7 1120.8,1216.4" fill="#8a8781" /><path d="M1109.7,1243.1 l85.0,23.1 l-4.2,11.2" stroke="#aeb6c6" stroke-width="1.500" opacity=".6" fill="none"/><polygon points="1115.7,1249.9 1185.3,1268.8 1171.3,1306.3 1101.7,1287.4" fill="#202022" /><polygon points="1114.8,1253.5 1176.6,1270.2 1168.2,1292.7 1106.4,1276.0" fill="#29292b" /><polygon points="1182.2,1278.2 1189.9,1280.2 1180.2,1306.5 1172.4,1304.4" fill="#b0ada7" /><polygon points="1108.9,1253.3 1113.7,1254.6 1104.7,1279.0 1099.8,1277.7" fill="#8a8781" /><path d="M1088.7,1304.4 l85.0,23.1 l-4.2,11.2" stroke="#aeb6c6" stroke-width="1.500" opacity=".6" fill="none"/><polygon points="1094.7,1311.2 1164.3,1330.1 1150.3,1367.6 1080.7,1348.7" fill="#202022" /><polygon points="1093.8,1314.8 1155.6,1331.5 1147.2,1354.0 1085.4,1337.3" fill="#29292b" /><polygon points="1161.2,1339.5 1168.9,1341.5 1159.2,1367.8 1151.4,1365.7" fill="#b0ada7" /><polygon points="1087.9,1314.6 1092.7,1315.9 1083.7,1340.3 1078.8,1339.0" fill="#8a8781" /><polygon points="1169.1,722.8 1275.3,751.6 1250.9,817.2 1144.7,788.4" fill="none" stroke="#aeb6c6" stroke-width="2" opacity=".8"/><polygon points="1221.5,1276.6 1289.1,1295.0 1252.5,1393.4 1184.9,1375.0" fill="none" stroke="#aeb6c6" stroke-width="2" opacity=".8"/><polygon points="1432.0,872.2 1528.6,898.4 1514.0,937.8 1417.4,911.6" fill="url(#dots)" /><polygon points="1415.0,922.2 1511.6,948.4 1497.0,987.8 1400.4,961.6" fill="url(#dots)" /><polygon points="1397.2,985.9 1503.5,1014.7 1488.8,1054.1 1382.5,1025.3" fill="url(#dots)" /><polygon points="1380.2,1037.9 1486.5,1066.7 1471.8,1106.1 1365.5,1077.3" fill="url(#dots)" /><polygon points="1426.500,863 1540,894 1520,997 1394,960.600" fill="none" stroke="#aeb6c6" stroke-width="2"/><polygon points="1389,976.700 1509,1011 1480,1110 1357,1071" fill="none" stroke="#aeb6c6" stroke-width="2"/><text x="1381" y="915" transform="rotate(12 1381 915)" font-family="Liberation Sans" font-weight="bold" font-size="17" fill="#e6e8ee">M5</text><text x="1337" y="1022" transform="rotate(12 1337 1022)" font-family="Liberation Sans" font-weight="bold" font-size="17" fill="#e6e8ee">M2</text><polygon points="1349.0,800.5 1464.9,832.0 1451.0,869.5 1335.1,838.0" fill="url(#pads)" opacity="0.9"/><polygon points="1248.7,1157.7 1316.3,1176.1 1295.3,1232.3 1227.7,1213.9" fill="url(#pads)" opacity="0.9"/><polygon points="1381.5,1224.0 1439.5,1239.8 1418.5,1296.0 1360.5,1280.2" fill="url(#pads)" opacity="0.8"/><polygon points="1459.7,1258.7 1517.7,1274.4 1500.3,1321.3 1442.3,1305.6" fill="url(#pads)" opacity="0.8"/><polygon points="1380.9,1170.7 1419.6,1181.2 1409.1,1209.3 1370.4,1198.8" fill="url(#pads)" opacity="0.8"/><polygon points="1496.0,1100.0 1540.0,1100.0 1540.0,1255.0 1455.5,1228.5" fill="#1c6f86" /><polygon points="1525.0,1020.5 1545.0,1020.0 1545.0,1100.0 1496.0,1100.0" fill="#1c6f86" /><polygon points="1496.0,1100.0 1503.0,1100.0 1463.0,1231.0 1455.5,1228.5" fill="#2f93ad" /><polygon points="1273.6,1376.7 1350.9,1397.7 1326.4,1463.3 1249.1,1442.3" fill="url(#pads)" opacity="0.85"/><polygon points="1253.8,1444.8 1360.1,1473.7 1346.2,1511.2 1239.9,1482.3" fill="url(#pads)" opacity="0.85"/><polygon points="1379.6,1478.0 1427.9,1491.1 1410.4,1538.0 1362.1,1524.9" fill="url(#pads)" opacity="0.8"/><polygon points="1459.7,1503.7 1517.7,1519.4 1500.3,1566.3 1442.3,1550.6" fill="url(#pads)" opacity="0.85"/><polygon points="1198.2,1444.6 1236.9,1455.1 1227.8,1479.4 1189.1,1468.9" fill="url(#pads)" opacity="0.8"/><polygon points="1131.3,1411.3 1156.4,1418.1 1148.7,1438.7 1123.6,1431.9" fill="url(#pads)" opacity="0.8"/><polygon points="1517.7,1439.8 1533.2,1444.0 1512.3,1500.2 1496.8,1496.0" fill="url(#pads)" opacity="0.7"/><polygon points="1214.9,1428.3 1238.0,1434.6 1233.1,1447.7 1210.0,1441.4" fill="#8d8a86" /><polygon points="1210.9,1446.3 1234.0,1452.6 1229.1,1465.7 1206.0,1459.4" fill="#8d8a86" /><polygon points="1431.0,1490.8 1471.6,1501.8 1457.0,1541.2 1416.4,1530.2" fill="#2b2d34" /><polygon points="1490.6,1276.8 1523.4,1285.7 1509.4,1323.2 1476.6,1314.3" fill="#2b2d34" /><path d="M1368.5,1391.8 Q1370.0,1387.0 1374.7,1388.7 L1421.3,1405.8 Q1426.0,1407.5 1424.6,1412.3 L1412.4,1453.7 Q1411.0,1458.5 1406.2,1457.1 L1357.5,1442.4 Q1352.7,1441.0 1354.2,1436.2 Z" fill="#a9a6a8" /><path d="M1436.1,1411.5 Q1437.5,1406.7 1442.3,1408.2 L1495.5,1425.5 Q1500.3,1427.0 1498.9,1431.8 L1482.8,1485.2 Q1481.4,1490.0 1476.7,1488.3 L1424.1,1469.7 Q1419.4,1468.0 1420.8,1463.2 Z" fill="#a9a6a8" /><polygon points="1363.7,1448.9 1396.5,1457.8 1392.3,1469.1 1359.5,1460.2" fill="#c9c0b4" /><polygon points="1431.7,1476.9 1464.5,1485.8 1460.3,1497.1 1427.5,1488.2" fill="#c9c0b4" /><text x="1376" y="1408" transform="rotate(105 1376 1408)" font-family="Liberation Sans" font-weight="normal" font-size="15" fill="#6a676a">2R2</text><text x="1362" y="1404" transform="rotate(105 1362 1404)" font-family="Liberation Sans" font-weight="normal" font-size="15" fill="#6a676a">2321</text><text x="1444" y="1428" transform="rotate(105 1444 1428)" font-family="Liberation Sans" font-weight="normal" font-size="15" fill="#6a676a">2R2</text><text x="1430" y="1424" transform="rotate(105 1430 1424)" font-family="Liberation Sans" font-weight="normal" font-size="15" fill="#6a676a">2321</text><path d="M952.2,1339.8 Q953.9,1335.1 958.7,1336.4 L997.4,1346.9 Q1002.2,1348.2 1000.5,1352.9 L985.8,1392.2 Q984.1,1396.9 979.3,1395.6 L940.6,1385.1 Q935.8,1383.8 937.5,1379.1 Z" fill="#8a8582" /><polygon points="941.1,1355.6 950.7,1358.2 940.9,1384.4 931.3,1381.8" fill="#c9c6c0" /><polygon points="998.1,1363.6 1007.7,1366.2 997.9,1392.4 988.3,1389.8" fill="#c9c6c0" /><text x="955" y="1362" transform="rotate(15 955 1362)" font-family="Liberation Sans" font-weight="normal" font-size="13" fill="#4a4644">1R0</text><text x="951" y="1380" transform="rotate(15 951 1380)" font-family="Liberation Sans" font-weight="normal" font-size="13" fill="#4a4644">2343</text><polygon points="1041.3,1376.1 1083.8,1387.6 1074.7,1411.9 1032.2,1400.4" fill="#2c2c2e" /><polygon points="1030.1,1372.6 1039.7,1375.2 1029.9,1401.4 1020.3,1398.8" fill="#b9b2a8" /><polygon points="1086.1,1386.6 1095.7,1389.2 1085.9,1415.4 1076.3,1412.8" fill="#b9b2a8" /><text x="1043" y="1394" transform="rotate(15 1043 1394)" font-family="Liberation Sans" font-weight="bold" font-size="10" fill="#e0e2e8">R005</text><polygon points="879.4,1415.0 945.7,1436.4 915.8,1528.4 849.4,1496.3" fill="#eef0f3" /><polygon points="884.0,1447.8 924.6,1458.8 910.0,1498.2 869.4,1487.2" fill="url(#qr)" /><text x="884" y="1430" transform="rotate(17 884 1430)" font-family="Liberation Sans" font-weight="normal" font-size="7" fill="#333">RTX 4070S 12G</text><text x="856" y="1494" transform="rotate(17 856 1494)" font-family="Liberation Sans" font-weight="normal" font-size="7" fill="#555">HY-231202002</text><text x="962" y="1510" transform="rotate(16 962 1510)" font-family="Liberation Sans" font-weight="bold" font-size="29" fill="#f2f2f4" letter-spacing="2.500" stroke="#f2f2f4" stroke-width=".8">HDMI</text><text x="1324" y="1537" transform="rotate(15 1324 1537)" font-family="Liberation Sans" font-weight="bold" font-size="11" fill="#d6dbe6">U49</text><text x="1318" y="1549" transform="rotate(15 1318 1549)" font-family="Liberation Sans" font-weight="bold" font-size="11" fill="#d6dbe6">U120</text><text x="1255" y="1462" transform="rotate(-75 1255 1462)" font-family="Liberation Sans" font-weight="bold" font-size="9" fill="#d6dbe6">U999929</text><text x="1266" y="1472" transform="rotate(-75 1266 1472)" font-family="Liberation Sans" font-weight="bold" font-size="9" fill="#d6dbe6">O93</text><text x="1277" y="1474" transform="rotate(-75 1277 1474)" font-family="Liberation Sans" font-weight="bold" font-size="9" fill="#d6dbe6">O36</text><text x="1344" y="1476" transform="rotate(15 1344 1476)" font-family="Liberation Sans" font-weight="bold" font-size="9" fill="#d6dbe6">O91</text><text x="1338" y="1425" transform="rotate(15 1338 1425)" font-family="Liberation Sans" font-weight="bold" font-size="9" fill="#d6dbe6">O97</text><path d="M2355.5,1763.3 Q2356.5,1759.4 2360.3,1760.5 L2450.5,1786.9 Q2454.3,1788.0 2453.2,1791.8 L2439.1,1841.2 Q2438.0,1845.0 2434.0,1845.0 L2344.0,1845.0 Q2340.0,1845.0 2340.5,1841.0 L2345.1,1805.5 Q2345.6,1801.5 2346.6,1797.6 Z" fill="#e6d9cc" /><polygon points="2366.0,1775.0 2440.0,1797.0 2428.0,1838.0 2356.0,1838.0" fill="#f2e9df" /><path d="M2474.8,1797.2 Q2476.0,1793.4 2479.8,1794.5 L2567.2,1819.4 Q2571.0,1820.5 2570.2,1824.4 L2566.5,1841.1 Q2565.7,1845.0 2561.7,1845.0 L2463.8,1845.0 Q2459.8,1845.0 2461.0,1841.2 Z" fill="#e6d9cc" /><polygon points="2347.3,1720.2 2463.2,1751.7 2452.7,1779.8 2336.8,1748.3" fill="url(#pads)" opacity="0.9"/><polygon points="2469.7,1720.3 2624.3,1762.2 2610.3,1799.7 2455.7,1757.8" fill="url(#pads)" opacity="0.9"/><polygon points="2570.1,1756.1 2647.4,1777.1 2629.9,1823.9 2552.6,1802.9" fill="url(#pads)" opacity="0.9"/><polygon points="2634.2,1732.6 2663.2,1740.5 2645.8,1787.4 2616.8,1779.5" fill="url(#pads)" opacity="0.8"/><text x="2366" y="1843" transform="rotate(12 2366 1843)" font-family="Liberation Sans" font-weight="bold" font-size="18" fill="#e8ecf4">FAN</text><path d="M1071.700,915.600 L1560,790" stroke="#f0801a" stroke-width="3.500"/><circle cx="1071.700" cy="915.600" r="8" fill="#f0801a"/></g></svg><div id="menubar" class="abs"><div class="abs" style="left:10px;top:8px;width:22px;height:21px;background:#0b2a4a;border-radius:4px"></div><div class="t" style="left:13px;top:11px;font-size:13px;font-weight:bold;color:#35a8ff">Ps</div><div class="t" style="left:52px">文件(F)</div><div class="t" style="left:126px">编辑(E)</div><div class="t" style="left:200px">图像(I)</div><div class="t" style="left:269px">图层(L)</div><div class="t" style="left:342px">文字(Y)</div><div class="t" style="left:417px">选择(S)</div><div class="t" style="left:492px">滤镜(T)</div><div class="t" style="left:567px">3D(D)</div><div class="t" style="left:632px">视图(V)</div><div class="t" style="left:708px">增效工具</div><div class="t" style="left:798px">窗口(W)</div><div class="t" style="left:880px">帮助(H)</div><svg style="left:3640px;top:0" width="200" height="40" viewBox="0 0 200 40" fill="none" stroke="#9a9a9a" stroke-width="1.5"><path d="M16 17h16"/><rect x="86" y="13" width="11" height="11" rx="2"/><path d="M89 13v-2.5h11v11h-3"/><path d="M156 10l15 14M171 10l-15 14"/></svg></div><div id="optbar" class="abs"><div class="abs" style="left:0;top:-2px;width:3840px;height:54px"><div class="abs" style="left:6px;top:12px;width:3px;height:30px;background:repeating-linear-gradient(#666 0 2px,transparent 2px 4px)"></div><svg style="left:28px;top:14px" width="30" height="26" viewBox="0 0 30 26"><path d="M15 1L1 14h4v11h7v-8h6v8h7V14h4z" fill="#dcdcdc"/></svg><div class="abs" style="left:80px;top:10px;width:2px;height:36px;background:#3f3f3f"></div><svg style="left:92px;top:12px" width="34" height="30" viewBox="0 0 34 30"><path d="M3 26L19 10" stroke="#dcdcdc" stroke-width="5" stroke-linecap="round"/><path d="M16 13l3-3" stroke="#535353" stroke-width="2"/><path d="M24 1l1.2 3.3 3.3 1.2-3.3 1.2L24 10l-1.2-3.300-3.300-1.200 3.300-1.200zM14 2l.8 2 .2.800 2 .7-2 .7-.8 2-.8-2-2-.7 2-.7zM28 12l.7 1.800 1.800.7-1.800.7-.7 1.800-.7-1.800-1.800-.7 1.800-.7z" fill="#dcdcdc"/></svg><svg style="left:130px;top:24px" width="12" height="8" viewBox="0 0 12 8" fill="none" stroke="#bdbdbd" stroke-width="1.5"><path d="M1 1l5 5 5-5"/></svg><div class="abs" style="left:153px;top:10px;width:2px;height:36px;background:#3f3f3f"></div><div class="abs" style="left:166px;top:9px;width:37px;height:37px;background:#383838;border-radius:2px"></div><div class="abs" style="left:177px;top:20px;width:16px;height:15px;background:#e0e0e0"></div><div class="abs" style="left:213px;top:17px;width:14px;height:14px;background:#dcdcdc"></div><div class="abs" style="left:220px;top:23px;width:15px;height:15px;background:#dcdcdc;border:1px solid #535353"></div><div class="abs" style="left:253px;top:17px;width:14px;height:14px;background:#dcdcdc"></div><div class="abs" style="left:259px;top:23px;width:15px;height:15px;background:#535353;border:2px solid #dcdcdc"></div><div class="abs" style="left:292px;top:17px;width:14px;height:14px;border:2px solid #dcdcdc"></div><div class="abs" style="left:298px;top:23px;width:15px;height:15px;border:2px solid #dcdcdc"></div><div class="abs" style="left:299px;top:24px;width:6px;height:6px;background:#dcdcdc"></div><div class="abs" style="left:334px;top:10px;width:2px;height:36px;background:#3f3f3f"></div><div class="t" style="left:355px;top:17px;font-size:18px;color:#c8c8c8;letter-spacing:1px">取样大小:</div><div class="abs" style="left:441px;top:14px;width:156px;height:30px;background:#454545;border:1px solid #5e5e5e;border-radius:4px"></div><div class="t" style="left:453px;top:19px;font-size:18px;color:#e0e0e0;letter-spacing:1px">取样点</div><svg style="left:581px;top:26px" width="12" height="8" viewBox="0 0 12 8" fill="none" stroke="#bdbdbd" stroke-width="1.5"><path d="M1 1l5 5 5-5"/></svg><div class="t" style="left:617px;top:17px;font-size:18px;color:#c8c8c8;letter-spacing:1px">容差:</div><div class="abs" style="left:668px;top:12px;width:71px;height:33px;background:#454545;border:1px solid #5e5e5e;border-radius:3px"></div><div class="t" style="left:673px;top:18px;font-size:19px;color:#e8e8e8">32</div><div class="abs" style="left:752px;top:20px;width:16px;height:16px;border-radius:3px;background:#e2e2e2"></div><svg style="left:754px;top:23px" width="12" height="10" viewBox="0 0 12 10" fill="none" stroke="#333" stroke-width="2.2"><path d="M1 5l3.500 3.500L11 1"/></svg><div class="t" style="left:779px;top:18px;font-size:18px;color:#dcdcdc;letter-spacing:.3px">消除锯齿</div><div class="abs" style="left:876px;top:20px;width:16px;height:16px;border-radius:3px;background:#e2e2e2"></div><svg style="left:878px;top:23px" width="12" height="10" viewBox="0 0 12 10" fill="none" stroke="#333" stroke-width="2.2"><path d="M1 5l3.500 3.500L11 1"/></svg><div class="t" style="left:903px;top:18px;font-size:18px;color:#dcdcdc;letter-spacing:.3px">连续</div><div class="abs" style="left:962px;top:20px;width:16px;height:16px;border-radius:3px;border:1px solid #8a8a8a;background:#4a4a4a"></div><div class="t" style="left:989px;top:18px;font-size:18px;color:#dcdcdc;letter-spacing:.3px">对所有图层取样</div><div class="abs" style="left:1142px;top:10px;width:2px;height:36px;background:#3f3f3f"></div><div class="abs" style="left:1160px;top:12px;width:106px;height:31px;background:#4c4c4c;border:1px solid #575757;border-radius:3px"></div><div class="t" style="left:1177px;top:18px;font-size:18px;color:#7e7e7e;letter-spacing:1px">选择主体</div><div class="abs" style="left:1273px;top:12px;width:29px;height:33px;background:#3f3f3f;border:1px solid #5a5a5a;border-radius:4px"></div><svg style="left:1279px;top:24px" width="18" height="11" viewBox="0 0 18 11" fill="none" stroke="#c0c0c0" stroke-width="1.5"><path d="M1 1l8 8 8-8"/></svg><div class="abs" style="left:1332px;top:12px;width:142px;height:31px;background:#4c4c4c;border:1px solid #575757;border-radius:3px"></div><div class="t" style="left:1348px;top:18px;font-size:18px;color:#7e7e7e;letter-spacing:1px">选择并遮住...</div><svg style="left:3736px;top:14px" width="28" height="28" viewBox="0 0 28 28" fill="none" stroke="#dcdcdc" stroke-width="2.5"><circle cx="11" cy="11" r="8"/><path d="M17 17l7 7"/></svg><svg style="left:3780px;top:17px" width="26" height="22" viewBox="0 0 26 22" fill="none" stroke="#dcdcdc" stroke-width="2"><rect x="1" y="1" width="24" height="19"/><path d="M1 4h24" stroke-width="3"/><rect x="4" y="8" width="3" height="9" fill="#dcdcdc" stroke="none"/></svg><svg style="left:3822px;top:24px" width="10" height="7" viewBox="0 0 10 7" fill="none" stroke="#aaa" stroke-width="1.3"><path d="M1 1l4 4 4-4"/></svg></div></div><div id="tabstrip" class="abs"></div><div id="doctab" class="abs"><div class="t">DSC016091.psb @ 23.3% (图层 3, RGB/16*) - 正在存储 67%</div><svg style="left:497px;top:16px" width="12" height="12" viewBox="0 0 12 12" stroke="#c8c8c8" stroke-width="2"><path d="M2 2l8 8M10 2l-8 8"/></svg></div><div id="toolbar" class="abs"></div><div id="toolhead" class="abs"></div><div class="t" style="left:8px;top:94px;font-size:13px;color:#d0d0d0;letter-spacing:-2px">&rsaquo;&rsaquo;</div><div class="abs" style="left:14px;top:118px;width:28px;height:5px;background:repeating-linear-gradient(90deg,#646464 0 2px,transparent 2px 4px)"></div><div class="abs" style="left:7px;top:256px;width:46px;height:37px;background:#333;border-radius:3px"></div><svg width="0" height="0"><defs><linearGradient id="tg"><stop offset="0" stop-color="#444"/><stop offset="1" stop-color="#eee"/></linearGradient></defs></svg><svg style="left:14px;top:144px" width="30" height="30" viewBox="0 0 30 30"><path d="M15 2l-4 5h3v6H8v-3l-5 4 5 4v-3h6v6h-3l4 5 4-5h-3v-6h6v3l5-4-5-4v3h-6V7h3z" fill="#dcdcdc" transform="translate(0,0) scale(.93)"/></svg><svg style="left:45px;top:168px" width="6" height="6" viewBox="0 0 6 6"><path d="M6 0v6H0z" fill="#b0b0b0"/></svg><svg style="left:14px;top:182px" width="30" height="30" viewBox="0 0 30 30"><rect x="3" y="5" width="23" height="18" fill="none" stroke="#dcdcdc" stroke-width="2" stroke-dasharray="5 3"/></svg><svg style="left:45px;top:206px" width="6" height="6" viewBox="0 0 6 6"><path d="M6 0v6H0z" fill="#b0b0b0"/></svg><svg style="left:14px;top:221px" width="30" height="30" viewBox="0 0 30 30"><ellipse cx="16" cy="11" rx="11" ry="7.500" fill="none" stroke="#dcdcdc" stroke-width="2" transform="rotate(-15 16 11)"/><path d="M7 15c-2 2-2 5 0 5s2-2 0-2-1 5 2 7" fill="none" stroke="#dcdcdc" stroke-width="1.5"/></svg><svg style="left:45px;top:245px" width="6" height="6" viewBox="0 0 6 6"><path d="M6 0v6H0z" fill="#b0b0b0"/></svg><svg style="left:14px;top:260px" width="30" height="30" viewBox="0 0 30 30"><path d="M4 25L19 10" stroke="#dcdcdc" stroke-width="4.500" stroke-linecap="round"/><path d="M15 14l3.500-3.500" stroke="#333" stroke-width="1.500"/><path d="M23 2l1 3 3 1-3 1-1 3-1-3-3-1 3-1zM13 2l.7 2 2 .7-2 .7-.7 2-.7-2-2-.7 2-.7zM26 12l.7 2 2 .7-2 .7-.7 2-.7-2-2-.7 2-.7z" fill="#dcdcdc"/></svg><svg style="left:45px;top:284px" width="6" height="6" viewBox="0 0 6 6"><path d="M6 0v6H0z" fill="#b0b0b0"/></svg><svg style="left:14px;top:299px" width="30" height="30" viewBox="0 0 30 30"><path d="M8 2v18h18M2 8h18v18" fill="none" stroke="#dcdcdc" stroke-width="3"/></svg><svg style="left:45px;top:323px" width="6" height="6" viewBox="0 0 6 6"><path d="M6 0v6H0z" fill="#b0b0b0"/></svg><svg style="left:14px;top:338px" width="30" height="30" viewBox="0 0 30 30"><rect x="4" y="4" width="22" height="20" fill="none" stroke="#dcdcdc" stroke-width="2"/><path d="M4 4l22 20M26 4L4 24" stroke="#dcdcdc" stroke-width="2"/></svg><svg style="left:14px;top:377px" width="30" height="30" viewBox="0 0 30 30"><path d="M4 26l2-6 11-11 4 4-11 11z" fill="none" stroke="#dcdcdc" stroke-width="2"/><path d="M16 8l3-4c2-2 6 2 4 4l-4 3 1 2-2 2-6-6 2-2z" fill="#dcdcdc"/></svg><svg style="left:45px;top:401px" width="6" height="6" viewBox="0 0 6 6"><path d="M6 0v6H0z" fill="#b0b0b0"/></svg><svg style="left:14px;top:416px" width="30" height="30" viewBox="0 0 30 30"><rect x="1" y="9" width="28" height="12" rx="6" fill="#dcdcdc" transform="rotate(-45 15 15)"/><circle cx="12" cy="15" r="1.300" fill="#535353"/><circle cx="15" cy="12" r="1.300" fill="#535353"/><circle cx="15" cy="18" r="1.300" fill="#535353"/><circle cx="18" cy="15" r="1.300" fill="#535353"/><path d="M3 14a7 7 0 0 1 11-9" fill="none" stroke="#dcdcdc" stroke-width="1.500" stroke-dasharray="3 2"/></svg><svg style="left:45px;top:440px" width="6" height="6" viewBox="0 0 6 6"><path d="M6 0v6H0z" fill="#b0b0b0"/></svg><svg style="left:14px;top:455px" width="30" height="30" viewBox="0 0 30 30"><path d="M26 2c1 1-8 14-12 17l-3-3C14 12 25 1 26 2z" fill="#dcdcdc"/><path d="M10 18l3 3c0 4-5 6-10 5 3-1 3-3 4-5 1-2 2-3 3-3z" fill="#dcdcdc"/></svg><svg style="left:45px;top:479px" width="6" height="6" viewBox="0 0 6 6"><path d="M6 0v6H0z" fill="#b0b0b0"/></svg><svg style="left:14px;top:494px" width="30" height="30" viewBox="0 0 30 30"><path d="M15 3a4.500 4.500 0 0 1 3 8c-1 2-1 4 1 5h5c2 0 2 1 2 4H4c0-3 0-4 2-4h5c2-1 2-3 1-5a4.500 4.500 0 0 1 3-8z" fill="#dcdcdc"/><rect x="5" y="22" width="20" height="3" fill="#dcdcdc"/></svg><svg style="left:45px;top:518px" width="6" height="6" viewBox="0 0 6 6"><path d="M6 0v6H0z" fill="#b0b0b0"/></svg><svg style="left:14px;top:533px" width="30" height="30" viewBox="0 0 30 30"><path d="M27 3c1 1-7 12-10 15l-3-3C16 12 26 2 27 3z" fill="#dcdcdc"/><path d="M13 17l3 3c0 3-4 5-8 4 2-1 2-2 3-4 .5-2 1-3 2-3z" fill="#dcdcdc"/><path d="M3 12a8 8 0 0 1 10-7" fill="none" stroke="#dcdcdc" stroke-width="2"/><path d="M1 9l3 5 4-4z" fill="#dcdcdc"/></svg><svg style="left:45px;top:557px" width="6" height="6" viewBox="0 0 6 6"><path d="M6 0v6H0z" fill="#b0b0b0"/></svg><svg style="left:14px;top:572px" width="30" height="30" viewBox="0 0 30 30"><path d="M4 18L16 5l10 7-9 11H9z" fill="#dcdcdc"/><path d="M4 18l8-9 9 7" fill="none" stroke="#535353" stroke-width="1.500"/><path d="M9 25h18" stroke="#dcdcdc" stroke-width="2"/></svg><svg style="left:45px;top:596px" width="6" height="6" viewBox="0 0 6 6"><path d="M6 0v6H0z" fill="#b0b0b0"/></svg><svg style="left:14px;top:611px" width="30" height="30" viewBox="0 0 30 30"><rect x="3" y="5" width="24" height="19" fill="url(#tg)" stroke="#dcdcdc" stroke-width="2"/></svg><svg style="left:45px;top:635px" width="6" height="6" viewBox="0 0 6 6"><path d="M6 0v6H0z" fill="#b0b0b0"/></svg><svg style="left:14px;top:650px" width="30" height="30" viewBox="0 0 30 30"><path d="M15 2c3 6 8 10 8 15a8 8 0 0 1-16 0c0-5 5-9 8-15z" fill="#dcdcdc"/></svg><svg style="left:45px;top:674px" width="6" height="6" viewBox="0 0 6 6"><path d="M6 0v6H0z" fill="#b0b0b0"/></svg><svg style="left:14px;top:689px" width="30" height="30" viewBox="0 0 30 30"><circle cx="18" cy="10" r="8" fill="#dcdcdc"/><path d="M12 16L3 26" stroke="#dcdcdc" stroke-width="3" stroke-linecap="round"/></svg><svg style="left:45px;top:713px" width="6" height="6" viewBox="0 0 6 6"><path d="M6 0v6H0z" fill="#b0b0b0"/></svg><svg style="left:14px;top:728px" width="30" height="30" viewBox="0 0 30 30"><path d="M6 26l3-12 9-7 7 7-7 9z" fill="none" stroke="#dcdcdc" stroke-width="2"/><path d="M6 26l8-8" stroke="#dcdcdc" stroke-width="1.500"/><circle cx="15" cy="17" r="2" fill="#dcdcdc"/><path d="M17 5l9 9" stroke="#dcdcdc" stroke-width="3"/></svg><svg style="left:45px;top:752px" width="6" height="6" viewBox="0 0 6 6"><path d="M6 0v6H0z" fill="#b0b0b0"/></svg><svg style="left:14px;top:767px" width="30" height="30" viewBox="0 0 30 30"><path d="M5 4h20v6h-2.500V7H17v16h3v2.500H10V23h3V7H7.500v3H5z" fill="#dcdcdc"/></svg><svg style="left:45px;top:791px" width="6" height="6" viewBox="0 0 6 6"><path d="M6 0v6H0z" fill="#b0b0b0"/></svg><svg style="left:14px;top:806px" width="30" height="30" viewBox="0 0 30 30"><path d="M8 2v22l6-6 4 9 3.500-1.500-4-9h8z" fill="#111" stroke="#dcdcdc" stroke-width="1.500"/></svg><svg style="left:45px;top:830px" width="6" height="6" viewBox="0 0 6 6"><path d="M6 0v6H0z" fill="#b0b0b0"/></svg><svg style="left:14px;top:845px" width="30" height="30" viewBox="0 0 30 30"><rect x="3" y="5" width="24" height="19" fill="#7a7a7a" stroke="#dcdcdc" stroke-width="2"/></svg><svg style="left:45px;top:869px" width="6" height="6" viewBox="0 0 6 6"><path d="M6 0v6H0z" fill="#b0b0b0"/></svg><svg style="left:14px;top:884px" width="30" height="30" viewBox="0 0 30 30"><path d="M9 27c-3-3-6-8-7-11 1-2 3-1 5 3V7c0-2 3-2 3 0v7-10c0-2 3-2 3 0v10-8c0-2 3-2 3 0v9-5c0-2 3-2 3 0v9c0 4-2 7-4 8z" fill="#dcdcdc"/></svg><svg style="left:45px;top:908px" width="6" height="6" viewBox="0 0 6 6"><path d="M6 0v6H0z" fill="#b0b0b0"/></svg><svg style="left:14px;top:923px" width="30" height="30" viewBox="0 0 30 30"><circle cx="12" cy="12" r="9" fill="none" stroke="#dcdcdc" stroke-width="2.500"/><path d="M19 19l8 8" stroke="#dcdcdc" stroke-width="3" stroke-linecap="round"/></svg><div class="abs" style="left:17px;top:974px;width:6px;height:6px;border-radius:3px;background:#dcdcdc;box-shadow:10px 0 #dcdcdc,20px 0 #dcdcdc"></div><svg style="left:45px;top:984px" width="6" height="6" viewBox="0 0 6 6"><path d="M6 0v6H0z" fill="#b0b0b0"/></svg><div class="abs" style="left:12px;top:1012px;width:12px;height:12px;background:#fff;border:1px solid #000"></div><div class="abs" style="left:6px;top:1005px;width:12px;height:12px;background:#000;border:1px solid #fff"></div><svg style="left:33px;top:1002px" width="20" height="20" viewBox="0 0 20 20" fill="none" stroke="#dcdcdc" stroke-width="2.500"><path d="M4 6c6-1 10 2 10 9"/><path d="M7 1L2 6l5 4M10 12l4 5 4-5" stroke-width="2"/></svg><div class="abs" style="left:23px;top:1044px;width:29px;height:29px;background:#fff;border-radius:2px"></div><div class="abs" style="left:8px;top:1030px;width:29px;height:28px;background:#000;border:2px solid #fff;outline:1px solid #333"></div><svg style="left:15px;top:1087px" width="28" height="22" viewBox="0 0 28 22" fill="none" stroke="#c8c8c8"><rect x="1" y="1" width="25" height="19" stroke-width="1.500"/><circle cx="13.500" cy="10.500" r="6" stroke-dasharray="2 2" stroke-width="1.500"/></svg><svg style="left:15px;top:1127px" width="28" height="22" viewBox="0 0 28 22" fill="none" stroke="#c8c8c8" stroke-width="1.800"><rect x="8" y="1" width="18" height="13"/><rect x="1" y="6" width="16" height="13" fill="#535353"/></svg><svg style="left:45px;top:1149px" width="6" height="6" viewBox="0 0 6 6"><path d="M6 0v6H0z" fill="#b0b0b0"/></svg><div id="statusbar" class="abs"></div><div class="abs" style="left:62px;top:2063px;width:74px;height:25px;background:#3c3c3c"></div><div class="t" style="left:67px;top:2067px;font-size:18px;color:#f0f0f0">23.28%</div><div class="abs" style="left:135px;top:2063px;width:255px;height:25px;background:#424242"></div><div class="abs" style="left:135px;top:2063px;width:172px;height:25px;background:#1667d9"></div><div class="t" style="left:208px;top:2066px;font-size:17.500px;color:#e8f0ff;letter-spacing:.5px">存储 67%</div><div class="abs" style="left:366px;top:2068px;width:15px;height:15px;border-radius:8px;background:#d8d8d8"></div><svg style="left:369px;top:2071px" width="9" height="9" viewBox="0 0 9 9" stroke="#222" stroke-width="2"><path d="M1 1l7 7M8 1L1 8"/></svg><div class="abs" style="left:390px;top:2063px;width:20px;height:25px;background:#505050"></div><svg style="left:396px;top:2069px" width="8" height="14" viewBox="0 0 8 14" fill="none" stroke="#a0a0a0" stroke-width="1.500"><path d="M1 1l5 6-5 6"/></svg><svg style="left:424px;top:2070px" width="8" height="12" viewBox="0 0 8 12" fill="none" stroke="#8a8a8a" stroke-width="1.300"><path d="M6 1L1 6l5 5"/></svg><svg style="left:3304px;top:2070px" width="8" height="12" viewBox="0 0 8 12" fill="none" stroke="#8a8a8a" stroke-width="1.300"><path d="M2 1l5 5-5 5"/></svg><div class="abs" style="left:1314px;top:2066px;width:1105px;height:19px;background:#6a6a6a"></div><div id="vscroll" class="abs"></div><div class="abs" style="left:3326px;top:742px;width:21px;height:716px;background:#686868"></div><svg style="left:3330px;top:2041px" width="12" height="8" viewBox="0 0 12 8" fill="none" stroke="#8a8a8a" stroke-width="1.300"><path d="M1 1l5 5 5-5"/></svg><div class="abs" style="left:3322px;top:2063px;width:30px;height:25px;background:#4b4b4b"></div><svg style="left:0;top:0" width="3840" height="2088" viewBox="0 0 3840 2088"><path d="M341.500 1930.500 L298.500 2053 L293 2049.500 L296.800 2066.500 L308.600 2057.500 L304.800 2055.500 Z" fill="#f23a3a"/></svg><div class="abs" style="left:2974px;top:113px;width:378px;height:246px;background:#535353;box-shadow:0 2px 6px rgba(0,0,0,.5);border:1px solid #383838"></div><div class="phead" style="left:2975px;top:115px;width:376px;height:43px"></div><div class="pbody" style="left:2975px;top:117px;width:91px;height:43px;border-right:1px solid #383838"></div><div class="ptab" style="left:2988px;top:125px;color:#f0f0f0">历史记录</div><div class="abs" style="left:3066px;top:117px;width:60px;height:40px;border-right:1px solid #3a3a3a"></div><div class="ptab dim" style="left:3079px;top:125px">注释</div><div class="t" style="left:3279px;top:125px;font-size:20px;color:#d8d8d8;letter-spacing:-2px">&rsaquo;&rsaquo;</div><div class="abs" style="left:3309px;top:128px;width:2px;height:20px;background:#9a9a9a"></div><svg style="left:3326px;top:131px" width="16" height="12" viewBox="0 0 16 12"><path d="M0 1.500h16M0 4.500h16M0 7.500h16M0 10.500h16" stroke="#d8d8d8" stroke-width="1.600"/></svg><div class="abs" style="left:2975px;top:170px;width:350px;height:34.500px;background:#535353;border-top:1px solid #484848"></div><div class="abs" style="left:2984px;top:179px;width:17px;height:17px;border:1px solid #626262;border-right-color:#4c4c4c;border-top-color:#4c4c4c"></div><svg style="left:3022px;top:177px" width="22" height="23" viewBox="0 0 22 23"><path d="M1 1h10l2 3h8v18H1z" fill="none" stroke="#dcdcdc" stroke-width="2"/><path d="M4 9h14M4 12.500h14M4 16h14M4 19h14" stroke="#dcdcdc" stroke-width="1.600"/></svg><div class="t" style="left:3063px;top:178px;font-size:18px;color:#e0e0e0;letter-spacing:1px">通过拷贝的图层</div><div class="abs" style="left:2975px;top:204.5px;width:350px;height:34.500px;background:#535353;border-top:1px solid #484848"></div><div class="abs" style="left:2984px;top:213.5px;width:17px;height:17px;border:1px solid #626262;border-right-color:#4c4c4c;border-top-color:#4c4c4c"></div><svg style="left:3022px;top:211.5px" width="22" height="23" viewBox="0 0 22 23"><path d="M1 1h10l2 3h8v18H1z" fill="none" stroke="#dcdcdc" stroke-width="2"/><path d="M4 9h14M4 12.500h14M4 16h14M4 19h14" stroke="#dcdcdc" stroke-width="1.600"/></svg><div class="t" style="left:3063px;top:212.5px;font-size:18px;color:#e0e0e0;letter-spacing:1px">图层可见性</div><div class="abs" style="left:2975px;top:239px;width:350px;height:34.500px;background:#535353;border-top:1px solid #484848"></div><div class="abs" style="left:2984px;top:248px;width:17px;height:17px;border:1px solid #626262;border-right-color:#4c4c4c;border-top-color:#4c4c4c"></div><svg style="left:3022px;top:246px" width="22" height="23" viewBox="0 0 22 23"><path d="M1 1h10l2 3h8v18H1z" fill="none" stroke="#dcdcdc" stroke-width="2"/><path d="M4 9h14M4 12.500h14M4 16h14M4 19h14" stroke="#dcdcdc" stroke-width="1.600"/></svg><div class="t" style="left:3063px;top:247px;font-size:18px;color:#e0e0e0;letter-spacing:1px">图层可见性</div><div class="abs" style="left:2975px;top:274px;width:350px;height:34.500px;background:#6a6a6a;border-top:1px solid #484848"></div><div class="abs" style="left:2984px;top:283px;width:17px;height:17px;border:1px solid #626262;border-right-color:#4c4c4c;border-top-color:#4c4c4c"></div><svg style="left:3022px;top:281px" width="22" height="23" viewBox="0 0 22 23"><path d="M1 1h10l2 3h8v18H1z" fill="none" stroke="#dcdcdc" stroke-width="2"/><path d="M4 9h14M4 12.500h14M4 16h14M4 19h14" stroke="#dcdcdc" stroke-width="1.600"/></svg><div class="t" style="left:3063px;top:282px;font-size:18px;color:#e0e0e0;letter-spacing:1px">图层可见性 (存储为)</div><div class="abs" style="left:3325px;top:168px;width:26px;height:141px;background:#4a4a4a"></div><div class="abs" style="left:3329px;top:251px;width:17px;height:32px;background:#6a6a6a;border-radius:3px"></div><svg style="left:3333px;top:177px" width="10" height="7" viewBox="0 0 10 7" fill="none" stroke="#777" stroke-width="1.500"><path d="M1 6l4-4 4 4"/></svg><svg style="left:3333px;top:290px" width="10" height="7" viewBox="0 0 10 7" fill="none" stroke="#777" stroke-width="1.500"><path d="M1 1l4 4 4-4"/></svg><div class="abs" style="left:2975px;top:309px;width:376px;height:38px;background:#535353;border-top:1px solid #3c3c3c"></div><svg style="left:3195px;top:318px" width="22" height="20" viewBox="0 0 22 20"><path d="M8 1h8l5 5v12H8z" fill="#dcdcdc"/><path d="M16 1v5h5" fill="#535353"/><path d="M0 12h10M5 7v10" stroke="#dcdcdc" stroke-width="3"/><path d="M11 8h6v8h-6z" fill="#535353"/></svg><svg style="left:3245px;top:319px" width="22" height="18" viewBox="0 0 22 18"><path d="M1 4h5l2-3h6l2 3h5v13H1z" fill="#dcdcdc"/><circle cx="11" cy="10" r="4.500" fill="#535353"/><circle cx="11" cy="10" r="2.500" fill="#dcdcdc"/></svg><svg style="left:3291px;top:318px" width="18" height="20" viewBox="0 0 18 20" fill="none" stroke="#dcdcdc" stroke-width="2"><path d="M1 4h16M6 4V1h6v3M3 4v15h12V4M7 8v8M11 8v8"/></svg><div class="abs" style="left:2975px;top:347px;width:376px;height:11px;background:#4d4d4d;border-top:1px solid #3a3a3a"></div><div class="abs" style="left:3152px;top:350px;width:22px;height:5px;background:repeating-linear-gradient(90deg,#6a6a6a 0 1px,transparent 1px 3px)"></div><div class="abs" style="left:3351px;top:95px;width:489px;height:17px;background:#424242;border-left:1px solid #383838"></div><div class="t" style="left:3389px;top:93px;font-size:15px;color:#d8d8d8;letter-spacing:-2px">&lsaquo;&lsaquo;</div><div class="t" style="left:3818px;top:93px;font-size:15px;color:#d8d8d8;letter-spacing:-2px">&rsaquo;&rsaquo;</div><div class="abs" style="left:3352px;top:112px;width:58px;height:1976px;background:#535353;border-left:1px solid #3c3c3c;border-right:2px solid #3c3c3c"></div><div class="abs" style="left:3366px;top:120px;width:28px;height:5px;background:repeating-linear-gradient(90deg,#646464 0 2px,transparent 2px 4px)"></div><div class="abs" style="left:3360px;top:131px;width:41px;height:33px;background:#333;border-radius:5px;border:1px solid #5c5c5c"></div><svg style="left:3368px;top:135px" width="28" height="26" viewBox="0 0 28 26"><rect x="1" y="1" width="6" height="6" fill="none" stroke="#dcdcdc" stroke-width="1.500"/><rect x="1" y="10" width="6" height="6" fill="none" stroke="#dcdcdc" stroke-width="1.500"/><rect x="0.500" y="19" width="7" height="7" fill="#dcdcdc"/><path d="M13 20c8-2 9-9 5-15" fill="none" stroke="#dcdcdc" stroke-width="3.500"/><path d="M12 7l8-5 1 9z" fill="#dcdcdc"/></svg><svg style="left:3368px;top:177px" width="26" height="24" viewBox="0 0 26 24"><path d="M3 0h20a3 3 0 0 1 3 3v11a3 3 0 0 1-3 3H12l-7 7v-7H3a3 3 0 0 1-3-3V3a3 3 0 0 1 3-3z" fill="#dcdcdc"/></svg><div class="abs" style="left:3353px;top:214px;width:56px;height:2px;background:#3e3e3e"></div><div class="pbody" style="left:3412px;top:112px;width:428px;height:474px"></div><div class="phead" style="left:3412px;top:112px;width:428px;height:41px;border-top:1px solid #383838"></div><div class="pbody" style="left:3412px;top:113px;width:59px;height:42px;border-right:1px solid #383838"></div><div class="ptab" style="left:3425px;top:122px;color:#f0f0f0">颜色</div><div class="abs" style="left:3471px;top:113px;width:60px;height:40px;border-right:1px solid #3a3a3a"></div><div class="ptab dim" style="left:3484px;top:122px">色板</div><div class="abs" style="left:3531px;top:113px;width:60px;height:40px;border-right:1px solid #3a3a3a"></div><div class="ptab dim" style="left:3544px;top:122px">渐变</div><div class="abs" style="left:3591px;top:113px;width:60px;height:40px;border-right:1px solid #3a3a3a"></div><div class="ptab dim" style="left:3604px;top:122px">图案</div><svg style="left:3815px;top:127px" width="16" height="12" viewBox="0 0 16 12"><path d="M0 1.500h16M0 4.500h16M0 7.500h16M0 10.500h16" stroke="#d8d8d8" stroke-width="1.600"/></svg><div class="abs" style="left:3443px;top:187px;width:28px;height:28px;background:#fff;border-radius:2px"></div><div class="abs" style="left:3426px;top:171px;width:30px;height:29px;background:#000;border:2px solid #fff;outline:1px solid #444"></div><div class="abs" style="left:3479px;top:166px;width:281px;height:386px;background:linear-gradient(to bottom,rgba(0,0,0,0) 0%,rgba(0,0,0,.18) 30%,rgba(0,0,0,.55) 62%,rgba(0,0,0,.9) 88%,#000 100%),linear-gradient(to right,#fff 0%,#ffa0a8 25%,#ff5a78 45%,#ff0a62 60%,#ff0030 75%,#ff0000 90%)"></div><svg style="left:3474px;top:541px" width="14" height="12" viewBox="0 0 14 12" fill="none" stroke="#fff" stroke-width="1.300"><path d="M5 1a9 9 0 0 1 9 9"/></svg><div class="abs" style="left:3785px;top:166px;width:29px;height:386px;background:linear-gradient(to bottom,#ff0000 0%,#ff0033 6%,#ff00ff 19%,#0000ff 30%,#00ffff 50%,#00ff00 68%,#ffff00 84%,#ff0000 93%,#ff0000 100%)"></div><svg style="left:3771px;top:546px" width="12" height="12" viewBox="0 0 12 12"><path d="M1 1h5l5 5-5 5H1z" fill="#e6e6e6"/></svg><div class="pbody" style="left:3412px;top:586px;width:428px;height:552px;border-top:2px solid #3a3a3a"></div><div class="phead" style="left:3412px;top:587px;width:428px;height:41px;border-top:1px solid #383838"></div><div class="pbody" style="left:3412px;top:588px;width:59px;height:42px;border-right:1px solid #383838"></div><div class="ptab" style="left:3425px;top:597px;color:#f0f0f0">属性</div><div class="abs" style="left:3471px;top:588px;width:59px;height:40px;border-right:1px solid #3a3a3a"></div><div class="ptab dim" style="left:3484px;top:597px">调整</div><div class="abs" style="left:3530px;top:588px;width:53px;height:40px;border-right:1px solid #3a3a3a"></div><div class="ptab dim" style="left:3543px;top:597px">库</div><svg style="left:3815px;top:602px" width="16" height="12" viewBox="0 0 16 12"><path d="M0 1.500h16M0 4.500h16M0 7.500h16M0 10.500h16" stroke="#d8d8d8" stroke-width="1.600"/></svg><div class="abs" style="left:3429px;top:639px;width:32px;height:32px;background:#383838;border-radius:3px"></div><svg style="left:3435px;top:646px" width="21" height="18" viewBox="0 0 21 18"><rect x="1" y="1" width="19" height="16" fill="none" stroke="#e0e0e0" stroke-width="1.800"/><path d="M3 15V9l4-3 3 3 3-4 5 5v5z" fill="#e0e0e0"/><rect x="8" y="3" width="4" height="3" fill="#e0e0e0"/></svg><div class="t" style="left:3472px;top:647px;font-size:18px;color:#d8d8d8;letter-spacing:1px">像素图层</div><div class="abs" style="left:3412px;top:679px;width:403px;height:2px;background:#454545"></div><svg style="left:3423px;top:699px" width="13" height="8" viewBox="0 0 13 8" fill="none" stroke="#bdbdbd" stroke-width="1.500"><path d="M1 1l5.500 5.500L12 1"/></svg><div class="t" style="left:3446px;top:694px;font-size:18px;color:#ececec;font-weight:bold;letter-spacing:1px">变换</div><div class="t" style="left:3479px;top:741px;font-size:18px;color:#8a8a8a">W</div><div class="abs" style="left:3503px;top:735px;width:84px;height:29px;background:#4a4a4a;border:1px solid #5c5c5c"></div><div class="t" style="left:3508px;top:741px;font-size:17px;color:#757575">9504 像素</div><div class="t" style="left:3603px;top:741px;font-size:18px;color:#8a8a8a">X</div><div class="abs" style="left:3623px;top:735px;width:85px;height:29px;background:#4a4a4a;border:1px solid #5c5c5c"></div><div class="t" style="left:3628px;top:741px;font-size:17px;color:#757575">0 像素</div><div class="t" style="left:3481px;top:784px;font-size:18px;color:#8a8a8a">H</div><div class="abs" style="left:3503px;top:778px;width:84px;height:29px;background:#4a4a4a;border:1px solid #5c5c5c"></div><div class="t" style="left:3508px;top:784px;font-size:17px;color:#757575">6283 像素</div><div class="t" style="left:3603px;top:784px;font-size:18px;color:#8a8a8a">Y</div><div class="abs" style="left:3623px;top:778px;width:85px;height:29px;background:#4a4a4a;border:1px solid #5c5c5c"></div><div class="t" style="left:3628px;top:784px;font-size:17px;color:#757575">53 像素</div><svg style="left:3438px;top:759px" width="12" height="24" viewBox="0 0 12 24" fill="none" stroke="#b8b8b8" stroke-width="2"><rect x="2" y="1" width="8" height="10" rx="4"/><rect x="2" y="12" width="8" height="10" rx="4"/><path d="M6 7v9"/></svg><svg style="left:3471px;top:829px" width="22" height="16" viewBox="0 0 22 16" fill="none" stroke="#d0d0d0" stroke-width="2"><path d="M1 15h20M1 15L15 2"/><path d="M11 15a9 9 0 0 0-3-7" stroke-width="1.500"/></svg><div class="abs" style="left:3503px;top:825px;width:64px;height:29px;background:#4a4a4a;border:1px solid #5c5c5c"></div><div class="t" style="left:3508px;top:831px;font-size:17px;color:#757575">0.00°</div><div class="abs" style="left:3567px;top:825px;width:23px;height:29px;background:#4a4a4a;border:1px solid #5c5c5c"></div><svg style="left:3574px;top:837px" width="10" height="7" viewBox="0 0 10 7" fill="none" stroke="#7a7a7a" stroke-width="1.500"><path d="M1 1l4 4 4-4"/></svg><svg style="left:3634px;top:829px" width="26" height="20" viewBox="0 0 26 20"><path d="M2 3l7 7-7 7z" fill="none" stroke="#cfcfcf" stroke-width="1.500"/><path d="M24 3l-7 7 7 7z" fill="#cfcfcf"/><path d="M13 0v20" stroke="#cfcfcf" stroke-width="1.500" stroke-dasharray="2 2"/></svg><svg style="left:3679px;top:826px" width="20" height="26" viewBox="0 0 20 26"><path d="M3 2l7 7 7-7z" fill="none" stroke="#cfcfcf" stroke-width="1.500"/><path d="M3 24l7-7 7 7z" fill="#cfcfcf"/><path d="M0 13h20" stroke="#cfcfcf" stroke-width="1.500" stroke-dasharray="2 2"/></svg><div class="abs" style="left:3412px;top:873px;width:403px;height:2px;background:#454545"></div><svg style="left:3423px;top:895px" width="13" height="8" viewBox="0 0 13 8" fill="none" stroke="#bdbdbd" stroke-width="1.500"><path d="M1 1l5.500 5.500L12 1"/></svg><div class="t" style="left:3446px;top:890px;font-size:18px;color:#ececec;font-weight:bold;letter-spacing:1px">对齐并分布</div><div class="t" style="left:3427px;top:929px;font-size:18px;color:#c8c8c8;letter-spacing:1px">对齐:</div><svg style="left:3432px;top:968px" width="26" height="26" viewBox="0 0 26 26" fill="#9c9c9c" stroke="none"><rect x="1" y="1" width="2" height="24"/><rect x="5" y="5" width="12" height="6"/><rect x="5" y="14" width="18" height="6"/></svg><svg style="left:3473px;top:968px" width="26" height="26" viewBox="0 0 26 26" fill="#9c9c9c" stroke="none"><rect x="12" y="1" width="2" height="24"/><rect x="6" y="5" width="14" height="6"/><rect x="4" y="14" width="18" height="6"/></svg><svg style="left:3517px;top:968px" width="26" height="26" viewBox="0 0 26 26" fill="#9c9c9c" stroke="none"><rect x="23" y="1" width="2" height="24"/><rect x="9" y="5" width="12" height="6"/><rect x="3" y="14" width="18" height="6"/></svg><svg style="left:3588px;top:968px" width="26" height="26" viewBox="0 0 26 26" fill="#9c9c9c" stroke="none"><rect x="1" y="3" width="24" height="2"/><rect x="5" y="7" width="6" height="16"/><rect x="14" y="7" width="6" height="10"/></svg><svg style="left:3630px;top:968px" width="26" height="26" viewBox="0 0 26 26" fill="#9c9c9c" stroke="none"><rect x="1" y="12" width="24" height="2"/><rect x="5" y="4" width="6" height="18"/><rect x="14" y="7" width="6" height="12"/></svg><svg style="left:3673px;top:968px" width="26" height="26" viewBox="0 0 26 26" fill="#9c9c9c" stroke="none"><rect x="1" y="21" width="24" height="2"/><rect x="5" y="3" width="6" height="16"/><rect x="14" y="9" width="6" height="10"/></svg><div class="abs" style="left:3683px;top:1024px;width:5px;height:5px;border-radius:3px;background:#e0e0e0;box-shadow:7px 0 #e0e0e0,14px 0 #e0e0e0"></div><div class="abs" style="left:3412px;top:1047px;width:403px;height:2px;background:#454545"></div><svg style="left:3423px;top:1067px" width="13" height="8" viewBox="0 0 13 8" fill="none" stroke="#bdbdbd" stroke-width="1.500"><path d="M1 1l5.500 5.500L12 1"/></svg><div class="t" style="left:3446px;top:1062px;font-size:18px;color:#ececec;font-weight:bold;letter-spacing:1px">快速操作</div><div class="abs" style="left:3815px;top:682px;width:25px;height:416px;background:#4a4a4a"></div><div class="abs" style="left:3818px;top:708px;width:18px;height:266px;background:#686868;border-radius:3px"></div><svg style="left:3822px;top:693px" width="10" height="7" viewBox="0 0 10 7" fill="none" stroke="#7c7c7c" stroke-width="1.500"><path d="M1 6l4-4 4 4"/></svg><svg style="left:3822px;top:1080px" width="10" height="7" viewBox="0 0 10 7" fill="none" stroke="#7c7c7c" stroke-width="1.500"><path d="M1 1l4 4 4-4"/></svg><div class="pbody" style="left:3412px;top:1137px;width:428px;height:951px;border-top:2px solid #3a3a3a"></div><div class="phead" style="left:3412px;top:1139px;width:428px;height:41px;border-top:1px solid #383838"></div><div class="pbody" style="left:3412px;top:1140px;width:59px;height:42px;border-right:1px solid #383838"></div><div class="ptab" style="left:3425px;top:1149px;color:#f0f0f0">图层</div><div class="abs" style="left:3471px;top:1140px;width:60px;height:40px;border-right:1px solid #3a3a3a"></div><div class="ptab dim" style="left:3484px;top:1149px">通道</div><div class="abs" style="left:3531px;top:1140px;width:60px;height:40px;border-right:1px solid #3a3a3a"></div><div class="ptab dim" style="left:3544px;top:1149px">路径</div><svg style="left:3815px;top:1154px" width="16" height="12" viewBox="0 0 16 12"><path d="M0 1.500h16M0 4.500h16M0 7.500h16M0 10.500h16" stroke="#d8d8d8" stroke-width="1.600"/></svg><div class="abs" style="left:3418px;top:1195px;width:127px;height:29px;background:#454545;border:1px solid #5a5a5a;border-radius:3px"></div><svg style="left:3429px;top:1201px" width="17" height="17" viewBox="0 0 17 17" fill="none" stroke="#e0e0e0" stroke-width="2.200"><circle cx="7" cy="7" r="5"/><path d="M11 11l5 5"/></svg><div class="t" style="left:3451px;top:1200px;font-size:18px;color:#e0e0e0">类型</div><svg style="left:3528px;top:1207px" width="12" height="8" viewBox="0 0 12 8" fill="none" stroke="#bdbdbd" stroke-width="1.500"><path d="M1 1l5 5 5-5"/></svg><svg style="left:3569px;top:1201px" width="22" height="18" viewBox="0 0 22 18"><rect x="1" y="1" width="19" height="15" fill="none" stroke="#dcdcdc" stroke-width="1.800"/><path d="M4 13l4-6 3 4 2-2 4 4z" fill="#dcdcdc"/></svg><svg style="left:3606px;top:1200px" width="20" height="20" viewBox="0 0 20 20"><circle cx="10" cy="10" r="8" fill="none" stroke="#dcdcdc" stroke-width="1.800"/><path d="M4 16A8.500 8.500 0 0 1 16 4z" fill="#dcdcdc"/></svg><div class="t" style="left:3642px;top:1197px;font-size:25px;font-weight:bold;color:#dcdcdc;font-family:'Liberation Serif',serif">T</div><svg style="left:3678px;top:1200px" width="22" height="20" viewBox="0 0 22 20" fill="none" stroke="#dcdcdc" stroke-width="1.800"><rect x="4" y="4" width="14" height="12"/><rect x="1.500" y="1.500" width="4" height="4" fill="#535353"/><rect x="16.500" y="1.500" width="4" height="4" fill="#535353"/><rect x="1.500" y="14.500" width="4" height="4" fill="#535353"/><rect x="16.500" y="14.500" width="4" height="4" fill="#535353"/></svg><svg style="left:3716px;top:1200px" width="20" height="20" viewBox="0 0 20 20"><path d="M5 1h8l5 5v12H5z" fill="#dcdcdc"/><path d="M13 1v5h5" fill="#535353"/><rect x="1" y="9" width="9" height="9" fill="#dcdcdc" stroke="#535353" stroke-width="1.500"/></svg><div class="abs" style="left:3758px;top:1196px;width:12px;height:26px;border-radius:6px;background:#454545"></div><div class="abs" style="left:3758px;top:1195px;width:13px;height:13px;border-radius:7px;background:#e6e6e6"></div><div class="abs" style="left:3412px;top:1230px;width:428px;height:1px;background:#454545"></div><div class="abs" style="left:3418px;top:1239px;width:174px;height:29px;background:#4a4a4a;border:1px solid #585858;border-radius:3px"></div><div class="t" style="left:3431px;top:1245px;font-size:18px;color:#7c7c7c;letter-spacing:1px">正常</div><svg style="left:3578px;top:1252px" width="10" height="7" viewBox="0 0 10 7" fill="none" stroke="#6a6a6a" stroke-width="1.500"><path d="M1 1l4 4 4-4"/></svg><div class="t" style="left:3604px;top:1244px;font-size:18px;color:#7c7c7c;letter-spacing:1px">不透明度:</div><div class="abs" style="left:3690px;top:1240px;width:57px;height:27px;background:#474747;border:1px solid #5a5a5a"></div><div class="t" style="left:3693px;top:1245px;font-size:18px;color:#6e6e6e">100%</div><div class="abs" style="left:3749px;top:1240px;width:20px;height:27px;background:#4a4a4a;border:1px solid #585858"></div><svg style="left:3754px;top:1252px" width="10" height="7" viewBox="0 0 10 7" fill="none" stroke="#6a6a6a" stroke-width="1.500"><path d="M1 1l4 4 4-4"/></svg><div class="abs" style="left:3412px;top:1274px;width:428px;height:1px;background:#454545"></div><div class="t" style="left:3421px;top:1287px;font-size:18px;color:#c8c8c8;letter-spacing:1px">锁定:</div><svg style="left:3478px;top:1287px" width="18" height="18" viewBox="0 0 18 18"><rect x="1" y="1" width="16" height="16" fill="none" stroke="#dcdcdc" stroke-width="1.500"/><rect x="1" y="1" width="5.500" height="5.500" fill="#dcdcdc"/><rect x="11.500" y="1" width="5.500" height="5.500" fill="#dcdcdc"/><rect x="6.500" y="6.500" width="5" height="5" fill="#dcdcdc"/><rect x="1" y="11.500" width="5.500" height="5.500" fill="#dcdcdc"/><rect x="11.500" y="11.500" width="5.500" height="5.500" fill="#dcdcdc"/></svg><svg style="left:3510px;top:1284px" width="22" height="24" viewBox="0 0 22 24"><path d="M20 1c1 1-7 12-10 15l-3-3C10 10 19 0 20 1z" fill="#dcdcdc"/><path d="M6 14l3 3c0 4-4 6-8 5 2-1 2-3 3-5 .5-2 1-3 2-3z" fill="#dcdcdc"/></svg><svg style="left:3542px;top:1285px" width="22" height="22" viewBox="0 0 22 22"><path d="M11 0l-4 5h3v5H5V7l-5 4 5 4v-3h5v5H7l4 5 4-5h-3v-5h5v3l5-4-5-4v3h-5V5h3z" fill="#dcdcdc"/></svg><svg style="left:3576px;top:1285px" width="22" height="22" viewBox="0 0 22 22" fill="none" stroke="#dcdcdc" stroke-width="2"><path d="M5 1v16h16M1 5h16v16" /><path d="M14 1l4 4" stroke-width="1.500"/></svg><svg style="left:3611px;top:1285px" width="18" height="21" viewBox="0 0 18 21"><rect x="1" y="9" width="16" height="11" rx="1.500" fill="#dcdcdc"/><path d="M4.500 9V6a4.500 4.500 0 0 1 9 0v3" fill="none" stroke="#dcdcdc" stroke-width="2.500"/><circle cx="9" cy="14.500" r="2" fill="#535353"/></svg><div class="t" style="left:3641px;top:1287px;font-size:18px;color:#7c7c7c;letter-spacing:1px">填充:</div><div class="abs" style="left:3690px;top:1283px;width:57px;height:27px;background:#474747;border:1px solid #5a5a5a"></div><div class="t" style="left:3693px;top:1288px;font-size:18px;color:#6e6e6e">100%</div><div class="abs" style="left:3749px;top:1283px;width:20px;height:27px;background:#4a4a4a;border:1px solid #585858"></div><svg style="left:3754px;top:1295px" width="10" height="7" viewBox="0 0 10 7" fill="none" stroke="#6a6a6a" stroke-width="1.500"><path d="M1 1l4 4 4-4"/></svg><div class="abs" style="left:3412px;top:1319px;width:428px;height:729px;overflow:hidden"><div class="lrow" style="left:0;top:-18.5px;background:#535353"><div class="abs" style="left:0;top:0;width:44px;height:46px;background:#535353;border-right:1px solid #454545"></div><svg style="left:12px;top:18px" width="22" height="14" viewBox="0 0 22 14"><path d="M1 7C4 2 8 0.500 11 0.500S18 2 21 7c-3 5-7 6.500-10 6.500S4 12 1 7z" fill="#e0e0e0"/><circle cx="11" cy="7" r="4.200" fill="#535353"/><circle cx="11" cy="7" r="2.200" fill="#e0e0e0"/></svg><svg style="left:60px;top:18px" width="12" height="16" viewBox="0 0 12 16" fill="none" stroke="#d8d8d8" stroke-width="2"><path d="M10 1H5v11"/><path d="M1 9l4 5 4-5" fill="#d8d8d8" stroke="none"/></svg><div class="abs" style="left:77px;top:9px;width:46px;height:31px;border:1px solid #2c2c2c;background:linear-gradient(110deg,#15151a 0 100%)"></div><div class="abs" style="left:90px;top:11px;width:8px;height:27px;background:#8a817a;transform:skewX(-18deg)"></div><div class="lname" style="left:138px">图层 1</div></div><div class="lrow" style="left:0;top:28.25px;background:#535353"><div class="abs" style="left:0;top:0;width:44px;height:46px;background:#535353;border-right:1px solid #454545"></div><svg style="left:12px;top:18px" width="22" height="14" viewBox="0 0 22 14"><path d="M1 7C4 2 8 0.500 11 0.500S18 2 21 7c-3 5-7 6.500-10 6.500S4 12 1 7z" fill="#e0e0e0"/><circle cx="11" cy="7" r="4.200" fill="#535353"/><circle cx="11" cy="7" r="2.200" fill="#e0e0e0"/></svg><div class="thumb"></div><div class="vbadge"></div><svg style="left:80px;top:22.500px" width="18" height="18" viewBox="0 0 18 18" fill="none" stroke="#e0e0e0" stroke-width="1.600"><rect x="3.500" y="3.500" width="11" height="11"/><rect x="1" y="1" width="4" height="4" fill="#4a4a4a"/><rect x="13" y="1" width="4" height="4" fill="#4a4a4a"/><rect x="1" y="13" width="4" height="4" fill="#4a4a4a"/><rect x="13" y="13" width="4" height="4" fill="#4a4a4a"/></svg><div class="lname" style="text-decoration:underline">椭圆 3</div></div><div class="lrow" style="left:0;top:75.0px;background:#535353"><div class="abs" style="left:0;top:0;width:44px;height:46px;background:#535353;border-right:1px solid #454545"></div><svg style="left:12px;top:18px" width="22" height="14" viewBox="0 0 22 14"><path d="M1 7C4 2 8 0.500 11 0.500S18 2 21 7c-3 5-7 6.500-10 6.500S4 12 1 7z" fill="#e0e0e0"/><circle cx="11" cy="7" r="4.200" fill="#535353"/><circle cx="11" cy="7" r="2.200" fill="#e0e0e0"/></svg><div class="thumb"></div><div class="vbadge"></div><svg style="left:80px;top:22.500px" width="18" height="18" viewBox="0 0 18 18" fill="none" stroke="#e0e0e0" stroke-width="1.600"><rect x="3.500" y="3.500" width="11" height="11"/><rect x="1" y="1" width="4" height="4" fill="#4a4a4a"/><rect x="13" y="1" width="4" height="4" fill="#4a4a4a"/><rect x="1" y="13" width="4" height="4" fill="#4a4a4a"/><rect x="13" y="13" width="4" height="4" fill="#4a4a4a"/></svg><div class="lname" style="">椭圆 2</div></div><div class="lrow" style="left:0;top:121.75px;background:#535353"><div class="abs" style="left:0;top:0;width:44px;height:46px;background:#535353;border-right:1px solid #454545"></div><svg style="left:12px;top:18px" width="22" height="14" viewBox="0 0 22 14"><path d="M1 7C4 2 8 0.500 11 0.500S18 2 21 7c-3 5-7 6.500-10 6.500S4 12 1 7z" fill="#e0e0e0"/><circle cx="11" cy="7" r="4.200" fill="#535353"/><circle cx="11" cy="7" r="2.200" fill="#e0e0e0"/></svg><div class="thumb"></div><div class="vbadge"></div><svg style="left:80px;top:22.500px" width="18" height="18" viewBox="0 0 18 18" fill="none" stroke="#e0e0e0" stroke-width="1.600"><rect x="3.500" y="3.500" width="11" height="11"/><rect x="1" y="1" width="4" height="4" fill="#4a4a4a"/><rect x="13" y="1" width="4" height="4" fill="#4a4a4a"/><rect x="1" y="13" width="4" height="4" fill="#4a4a4a"/><rect x="13" y="13" width="4" height="4" fill="#4a4a4a"/></svg><div class="lname" style="">直线 6</div></div><div class="lrow" style="left:0;top:168.5px;background:#535353"><div class="abs" style="left:0;top:0;width:44px;height:46px;background:#535353;border-right:1px solid #454545"></div><svg style="left:12px;top:18px" width="22" height="14" viewBox="0 0 22 14"><path d="M1 7C4 2 8 0.500 11 0.500S18 2 21 7c-3 5-7 6.500-10 6.500S4 12 1 7z" fill="#e0e0e0"/><circle cx="11" cy="7" r="4.200" fill="#535353"/><circle cx="11" cy="7" r="2.200" fill="#e0e0e0"/></svg><div class="thumb"></div><div class="vbadge"></div><svg style="left:80px;top:22.500px" width="18" height="18" viewBox="0 0 18 18" fill="none" stroke="#e0e0e0" stroke-width="1.600"><rect x="3.500" y="3.500" width="11" height="11"/><rect x="1" y="1" width="4" height="4" fill="#4a4a4a"/><rect x="13" y="1" width="4" height="4" fill="#4a4a4a"/><rect x="1" y="13" width="4" height="4" fill="#4a4a4a"/><rect x="13" y="13" width="4" height="4" fill="#4a4a4a"/></svg><div class="lname" style="">直线 5</div></div><div class="lrow" style="left:0;top:215.25px;background:#535353"><div class="abs" style="left:0;top:0;width:44px;height:46px;background:#535353;border-right:1px solid #454545"></div><svg style="left:12px;top:18px" width="22" height="14" viewBox="0 0 22 14"><path d="M1 7C4 2 8 0.500 11 0.500S18 2 21 7c-3 5-7 6.500-10 6.500S4 12 1 7z" fill="#e0e0e0"/><circle cx="11" cy="7" r="4.200" fill="#535353"/><circle cx="11" cy="7" r="2.200" fill="#e0e0e0"/></svg><div class="thumb"></div><div class="vbadge"></div><svg style="left:80px;top:22.500px" width="18" height="18" viewBox="0 0 18 18" fill="none" stroke="#e0e0e0" stroke-width="1.600"><rect x="3.500" y="3.500" width="11" height="11"/><rect x="1" y="1" width="4" height="4" fill="#4a4a4a"/><rect x="13" y="1" width="4" height="4" fill="#4a4a4a"/><rect x="1" y="13" width="4" height="4" fill="#4a4a4a"/><rect x="13" y="13" width="4" height="4" fill="#4a4a4a"/></svg><div class="lname" style="">直线 4</div></div><div class="lrow" style="left:0;top:262.0px;background:#535353"><div class="abs" style="left:0;top:0;width:44px;height:46px;background:#535353;border-right:1px solid #454545"></div><svg style="left:12px;top:18px" width="22" height="14" viewBox="0 0 22 14"><path d="M1 7C4 2 8 0.500 11 0.500S18 2 21 7c-3 5-7 6.500-10 6.500S4 12 1 7z" fill="#e0e0e0"/><circle cx="11" cy="7" r="4.200" fill="#535353"/><circle cx="11" cy="7" r="2.200" fill="#e0e0e0"/></svg><svg style="left:60px;top:18px" width="12" height="16" viewBox="0 0 12 16" fill="none" stroke="#d8d8d8" stroke-width="2"><path d="M10 1H5v11"/><path d="M1 9l4 5 4-5" fill="#d8d8d8" stroke="none"/></svg><div class="abs" style="left:77px;top:9px;width:46px;height:31px;border:1px solid #2c2c2c;background:linear-gradient(100deg,#f4f0ea 0 18%,#c9741c 18% 26%,#16161b 26% 100%)"></div><div class="abs" style="left:90px;top:11px;width:8px;height:27px;background:#8a817a;transform:skewX(-18deg)"></div><div class="lname" style="left:138px">背景 拷贝 2</div></div><div class="lrow" style="left:0;top:308.75px;background:#535353"><div class="abs" style="left:0;top:0;width:44px;height:46px;background:#535353;border-right:1px solid #454545"></div><svg style="left:12px;top:18px" width="22" height="14" viewBox="0 0 22 14"><path d="M1 7C4 2 8 0.500 11 0.500S18 2 21 7c-3 5-7 6.500-10 6.500S4 12 1 7z" fill="#e0e0e0"/><circle cx="11" cy="7" r="4.200" fill="#535353"/><circle cx="11" cy="7" r="2.200" fill="#e0e0e0"/></svg><div class="thumb"></div><div class="vbadge"></div><svg style="left:80px;top:22.500px" width="18" height="18" viewBox="0 0 18 18" fill="none" stroke="#e0e0e0" stroke-width="1.600"><rect x="3.500" y="3.500" width="11" height="11"/><rect x="1" y="1" width="4" height="4" fill="#4a4a4a"/><rect x="13" y="1" width="4" height="4" fill="#4a4a4a"/><rect x="1" y="13" width="4" height="4" fill="#4a4a4a"/><rect x="13" y="13" width="4" height="4" fill="#4a4a4a"/></svg><div class="lname" style="text-decoration:underline">椭圆 1</div></div><div class="lrow" style="left:0;top:355.5px;background:#535353"><div class="abs" style="left:0;top:0;width:44px;height:46px;background:#535353;border-right:1px solid #454545"></div><svg style="left:12px;top:18px" width="22" height="14" viewBox="0 0 22 14"><path d="M1 7C4 2 8 0.500 11 0.500S18 2 21 7c-3 5-7 6.500-10 6.500S4 12 1 7z" fill="#e0e0e0"/><circle cx="11" cy="7" r="4.200" fill="#535353"/><circle cx="11" cy="7" r="2.200" fill="#e0e0e0"/></svg><div class="thumb"></div><div class="vbadge"></div><svg style="left:80px;top:22.500px" width="18" height="18" viewBox="0 0 18 18" fill="none" stroke="#e0e0e0" stroke-width="1.600"><rect x="3.500" y="3.500" width="11" height="11"/><rect x="1" y="1" width="4" height="4" fill="#4a4a4a"/><rect x="13" y="1" width="4" height="4" fill="#4a4a4a"/><rect x="1" y="13" width="4" height="4" fill="#4a4a4a"/><rect x="13" y="13" width="4" height="4" fill="#4a4a4a"/></svg><div class="lname" style="">矩形 6</div></div><div class="lrow" style="left:0;top:402.25px;background:#535353"><div class="abs" style="left:0;top:0;width:44px;height:46px;background:#535353;border-right:1px solid #454545"></div><svg style="left:12px;top:18px" width="22" height="14" viewBox="0 0 22 14"><path d="M1 7C4 2 8 0.500 11 0.500S18 2 21 7c-3 5-7 6.500-10 6.500S4 12 1 7z" fill="#e0e0e0"/><circle cx="11" cy="7" r="4.200" fill="#535353"/><circle cx="11" cy="7" r="2.200" fill="#e0e0e0"/></svg><div class="thumb"></div><div class="vbadge"></div><svg style="left:80px;top:22.500px" width="18" height="18" viewBox="0 0 18 18" fill="none" stroke="#e0e0e0" stroke-width="1.600"><rect x="3.500" y="3.500" width="11" height="11"/><rect x="1" y="1" width="4" height="4" fill="#4a4a4a"/><rect x="13" y="1" width="4" height="4" fill="#4a4a4a"/><rect x="1" y="13" width="4" height="4" fill="#4a4a4a"/><rect x="13" y="13" width="4" height="4" fill="#4a4a4a"/></svg><div class="lname" style="">矩形 5</div></div><div class="lrow" style="left:0;top:449.0px;background:#535353"><div class="abs" style="left:0;top:0;width:44px;height:46px;background:#535353;border-right:1px solid #454545"></div><svg style="left:12px;top:18px" width="22" height="14" viewBox="0 0 22 14"><path d="M1 7C4 2 8 0.500 11 0.500S18 2 21 7c-3 5-7 6.500-10 6.500S4 12 1 7z" fill="#e0e0e0"/><circle cx="11" cy="7" r="4.200" fill="#535353"/><circle cx="11" cy="7" r="2.200" fill="#e0e0e0"/></svg><div class="thumb"></div><div class="vbadge"></div><svg style="left:80px;top:22.500px" width="18" height="18" viewBox="0 0 18 18" fill="none" stroke="#e0e0e0" stroke-width="1.600"><rect x="3.500" y="3.500" width="11" height="11"/><rect x="1" y="1" width="4" height="4" fill="#4a4a4a"/><rect x="13" y="1" width="4" height="4" fill="#4a4a4a"/><rect x="1" y="13" width="4" height="4" fill="#4a4a4a"/><rect x="13" y="13" width="4" height="4" fill="#4a4a4a"/></svg><div class="lname" style="">矩形 4</div></div><div class="lrow" style="left:0;top:495.75px;background:#535353"><div class="abs" style="left:0;top:0;width:44px;height:46px;background:#535353;border-right:1px solid #454545"></div><svg style="left:12px;top:18px" width="22" height="14" viewBox="0 0 22 14"><path d="M1 7C4 2 8 0.500 11 0.500S18 2 21 7c-3 5-7 6.500-10 6.500S4 12 1 7z" fill="#e0e0e0"/><circle cx="11" cy="7" r="4.200" fill="#535353"/><circle cx="11" cy="7" r="2.200" fill="#e0e0e0"/></svg><div class="thumb"></div><div class="vbadge"></div><svg style="left:80px;top:22.500px" width="18" height="18" viewBox="0 0 18 18" fill="none" stroke="#e0e0e0" stroke-width="1.600"><rect x="3.500" y="3.500" width="11" height="11"/><rect x="1" y="1" width="4" height="4" fill="#4a4a4a"/><rect x="13" y="1" width="4" height="4" fill="#4a4a4a"/><rect x="1" y="13" width="4" height="4" fill="#4a4a4a"/><rect x="13" y="13" width="4" height="4" fill="#4a4a4a"/></svg><div class="lname" style="">矩形 3</div></div><div class="lrow" style="left:0;top:542.5px;background:#535353"><div class="abs" style="left:0;top:0;width:44px;height:46px;background:#535353;border-right:1px solid #454545"></div><svg style="left:12px;top:18px" width="22" height="14" viewBox="0 0 22 14"><path d="M1 7C4 2 8 0.500 11 0.500S18 2 21 7c-3 5-7 6.500-10 6.500S4 12 1 7z" fill="#e0e0e0"/><circle cx="11" cy="7" r="4.200" fill="#535353"/><circle cx="11" cy="7" r="2.200" fill="#e0e0e0"/></svg><div class="thumb"></div><div class="vbadge"></div><svg style="left:80px;top:22.500px" width="18" height="18" viewBox="0 0 18 18" fill="none" stroke="#e0e0e0" stroke-width="1.600"><rect x="3.500" y="3.500" width="11" height="11"/><rect x="1" y="1" width="4" height="4" fill="#4a4a4a"/><rect x="13" y="1" width="4" height="4" fill="#4a4a4a"/><rect x="1" y="13" width="4" height="4" fill="#4a4a4a"/><rect x="13" y="13" width="4" height="4" fill="#4a4a4a"/></svg><div class="lname" style="">矩形 2</div></div><div class="lrow" style="left:0;top:589.25px;background:#535353"><div class="abs" style="left:0;top:0;width:44px;height:46px;background:#535353;border-right:1px solid #454545"></div><svg style="left:12px;top:18px" width="22" height="14" viewBox="0 0 22 14"><path d="M1 7C4 2 8 0.500 11 0.500S18 2 21 7c-3 5-7 6.500-10 6.500S4 12 1 7z" fill="#e0e0e0"/><circle cx="11" cy="7" r="4.200" fill="#535353"/><circle cx="11" cy="7" r="2.200" fill="#e0e0e0"/></svg><div class="thumb"></div><div class="vbadge"></div><svg style="left:80px;top:22.500px" width="18" height="18" viewBox="0 0 18 18" fill="none" stroke="#e0e0e0" stroke-width="1.600"><rect x="3.500" y="3.500" width="11" height="11"/><rect x="1" y="1" width="4" height="4" fill="#4a4a4a"/><rect x="13" y="1" width="4" height="4" fill="#4a4a4a"/><rect x="1" y="13" width="4" height="4" fill="#4a4a4a"/><rect x="13" y="13" width="4" height="4" fill="#4a4a4a"/></svg><div class="lname" style="">矩形 1</div></div><div class="lrow" style="left:0;top:636.0px;background:#6a6a6a"><div class="abs" style="left:0;top:0;width:44px;height:46px;background:#535353;border-right:1px solid #454545"></div><div class="abs" style="left:12px;top:15px;width:19px;height:19px;border:1px solid #636363;border-top-color:#4a4a4a;border-left-color:#4a4a4a"></div><div class="abs" style="left:52px;top:9.500px;width:46px;height:31px;border:1px solid #2c2c2c;outline:1.500px solid #f2f2f2;outline-offset:2.500px;background:#fff;overflow:hidden"><svg style="left:0;top:0" width="44" height="29" viewBox="0 0 44 29"><polygon points="5,2 44,9 44,28 24,29 1,19" fill="#1b1d25"/><ellipse cx="23" cy="15" rx="7" ry="5.500" fill="#3d6a8a"/><path d="M8 8l30 8M6 14l32 9M14 5l-4 16M32 9l-3 17" stroke="#7d8590" stroke-width="1" stroke-dasharray="1.500 2" opacity=".8"/><path d="M2 17l6 3" stroke="#d9a46a" stroke-width="2"/></svg></div><div class="lname" style="left:114px">图层 3</div></div><div class="lrow" style="left:0;top:682.75px;background:#535353"><div class="abs" style="left:0;top:0;width:44px;height:46px;background:#535353;border-right:1px solid #454545"></div><svg style="left:12px;top:18px" width="22" height="14" viewBox="0 0 22 14"><path d="M1 7C4 2 8 0.500 11 0.500S18 2 21 7c-3 5-7 6.500-10 6.500S4 12 1 7z" fill="#e0e0e0"/><circle cx="11" cy="7" r="4.200" fill="#535353"/><circle cx="11" cy="7" r="2.200" fill="#e0e0e0"/></svg><div class="abs" style="left:52px;top:9.500px;width:46px;height:31px;border:1px solid #2c2c2c;background:#fff;overflow:hidden"><svg style="left:0;top:0" width="44" height="29" viewBox="0 0 44 29"><polygon points="5,2 44,9 44,28 24,29 1,19" fill="#1b1d25"/><ellipse cx="23" cy="15" rx="7" ry="5.500" fill="#3d6a8a"/><path d="M8 8l30 8M6 14l32 9M14 5l-4 16M32 9l-3 17" stroke="#7d8590" stroke-width="1" stroke-dasharray="1.500 2" opacity=".8"/><path d="M2 17l6 3" stroke="#d9a46a" stroke-width="2"/></svg></div><div class="lname" style="left:114px">背景</div><svg style="left:364px;top:13px" width="17" height="20" viewBox="0 0 17 20" fill="none" stroke="#d8d8d8" stroke-width="1.800"><rect x="1" y="8" width="15" height="11"/><path d="M4.500 8V5a4 4 0 0 1 8 0v3"/><rect x="7" y="12" width="3" height="3" fill="#d8d8d8" stroke="none"/></svg></div></div><div class="abs" style="left:3489px;top:1641px;width:6px;height:6px;border-radius:3px;background:#e8902a"></div><div class="abs" style="left:3815px;top:1319px;width:25px;height:729px;background:#4a4a4a"></div><div class="abs" style="left:3818px;top:1582px;width:18px;height:442px;background:#686868;border-radius:3px"></div><svg style="left:3822px;top:1333px" width="10" height="7" viewBox="0 0 10 7" fill="none" stroke="#7c7c7c" stroke-width="1.500"><path d="M1 6l4-4 4 4"/></svg><svg style="left:3822px;top:2031px" width="10" height="7" viewBox="0 0 10 7" fill="none" stroke="#7c7c7c" stroke-width="1.500"><path d="M1 1l4 4 4-4"/></svg><div class="abs" style="left:3412px;top:2048px;width:428px;height:40px;background:#535353;border-top:2px solid #3e3e3e"></div><svg style="left:3533px;top:2062px" width="22" height="12" viewBox="0 0 22 12" fill="none" stroke="#8a8a8a" stroke-width="2"><path d="M9 1H6a5 5 0 0 0 0 10h3M13 1h3a5 5 0 0 1 0 10h-3M6 6h10"/></svg><div class="t" style="left:3578px;top:2054px;font-size:23px;font-style:italic;color:#dcdcdc">fx</div><svg style="left:3593px;top:2076px" width="7" height="4" viewBox="0 0 7 4"><path d="M0 0h7L3.500 4z" fill="#dcdcdc"/></svg><svg style="left:3616px;top:2059px" width="20" height="16" viewBox="0 0 20 16"><rect width="20" height="16" fill="#dcdcdc"/><circle cx="10" cy="8" r="4.500" fill="#535353"/></svg><svg style="left:3657px;top:2058px" width="18" height="18" viewBox="0 0 18 18"><circle cx="9" cy="9" r="7.500" fill="none" stroke="#dcdcdc" stroke-width="1.800"/><path d="M3.500 14.500A8 8 0 0 1 14.500 3.500z" fill="#dcdcdc"/></svg><svg style="left:3674px;top:2076px" width="7" height="4" viewBox="0 0 7 4"><path d="M0 0h7L3.500 4z" fill="#dcdcdc"/></svg><svg style="left:3697px;top:2059px" width="20" height="16" viewBox="0 0 20 16"><path d="M0 1h7l2 2h11v13H0z" fill="#dcdcdc"/></svg><svg style="left:3738px;top:2058px" width="18" height="18" viewBox="0 0 18 18" fill="none" stroke="#dcdcdc" stroke-width="1.800"><rect x="1" y="1" width="16" height="16"/><path d="M9 5v8M5 9h8"/></svg><svg style="left:3778px;top:2057px" width="17" height="20" viewBox="0 0 17 20" fill="none" stroke="#dcdcdc" stroke-width="1.800"><path d="M1 4h15M5.500 4V1h6v3M2.500 4v15h12V4M6.500 8v8M10.500 8v8"/></svg><div id="tm"><svg style="left:27px;top:25px" width="24" height="20" viewBox="0 0 24 20"><rect width="24" height="18" rx="2" fill="#1f7fd6"/><path d="M0 14l4-5 2 3 3-7 3 8 3-6 3 5 3-4 3 4v5H0z" fill="#8fd4ff"/><rect y="14" width="24" height="4" fill="#bfe6ff"/></svg><div class="t" style="left:85px;top:26px;font-size:18.500px">任务管理器</div><div class="abs" style="left:503px;top:11px;width:545px;height:46px;background:#f9fbfd;border:1px solid #dfe3e9;border-bottom:2px solid #c9ced6;border-radius:7px"></div><svg style="left:526px;top:27px" width="18" height="18" viewBox="0 0 18 18" fill="none" stroke="#4a4a4a" stroke-width="1.500"><circle cx="7" cy="7" r="5.500"/><path d="M11 11l6 6"/></svg><div class="t" style="left:572px;top:25px;font-size:21px;color:#5d5d5d !important">键入要搜索的名称、发布者或 PID</div><svg style="left:1436px;top:10px" width="170" height="24" viewBox="0 0 170 24" fill="none" stroke="#1a1a1a" stroke-width="1.600"><path d="M1 11.500h15"/><rect x="70" y="4" width="14" height="14" rx="1.500"/><path d="M141 4l14 14M155 4l-14 14"/></svg><svg style="left:26px;top:99px" width="24" height="18" viewBox="0 0 24 18" stroke="#1a1a1a" stroke-width="1.600"><path d="M0 1.500h22M0 9h22M0 16.500h22"/></svg><div class="abs" style="left:8px;top:142px;width:60px;height:53px;background:#e8ecf1;border-radius:6px"></div><div class="abs" style="left:8px;top:157px;width:5px;height:23px;background:#0a63c9;border-radius:3px"></div><svg style="left:28px;top:158px" width="19" height="19" viewBox="0 0 22 22" stroke="#1a1a1a" stroke-width="1.700" fill="none" stroke-linecap="round" stroke-linejoin="round"><rect x="1" y="1" width="20" height="20" rx="3" stroke="none"/><path d="M4 1h6v20H4a3 3 0 0 1-3-3V4a3 3 0 0 1 3-3z"/><path d="M10 1h8a3 3 0 0 1 3 3v5H10z"/><path d="M1 12h9"/></svg><svg style="left:27px;top:217px" width="21" height="21" viewBox="0 0 24 24" stroke="#1a1a1a" stroke-width="1.700" fill="none" stroke-linecap="round" stroke-linejoin="round"><rect x="1" y="1" width="22" height="22" rx="4"/><path d="M4 13h4l2-5 3 9 2-6h5"/></svg><svg style="left:26px;top:277px" width="23" height="23" viewBox="0 0 26 26" stroke="#1a1a1a" stroke-width="1.700" fill="none" stroke-linecap="round" stroke-linejoin="round"><path d="M3 6v6h6"/><path d="M3 12A10.500 10.500 0 1 1 5 19.500"/><path d="M13 7v6.500h5"/></svg><svg style="left:26px;top:339px" width="24" height="19" viewBox="0 0 26 20" stroke="#1a1a1a" stroke-width="1.700" fill="none" stroke-linecap="round" stroke-linejoin="round"><path d="M2 11C4 6 8 3.500 13 3.500s9 2.500 11 7.500"/><path d="M2 11l3.500-.5M24 11l-3.500-.5M2 11l1.500-3M24 11l-1.500-3" stroke-width="1.400"/><path d="M12 18c-.8-.3-1-1-.8-1.800L15.500 6l1 .4-2.700 10.700c-.2.800-1 1.200-1.800.9z" fill="#1a1a1a" stroke-width="1"/></svg><svg style="left:26px;top:396px" width="23" height="21" viewBox="0 0 26 24" stroke="#1a1a1a" stroke-width="1.700" fill="none" stroke-linecap="round" stroke-linejoin="round"><circle cx="9" cy="6" r="4.500"/><path d="M1 16c0-2 1-3 3-3h10c2 0 3 1 3 3 0 4-3 7-8 7s-8-3-8-7z"/><circle cx="20" cy="7" r="3.500"/><path d="M19 13h3c2 0 3 1 3 3 0 3-2 5-5 5"/></svg><svg style="left:26px;top:458px" width="23" height="18" viewBox="0 0 26 20" stroke="#1a1a1a" stroke-width="1.700" fill="none" stroke-linecap="round" stroke-linejoin="round"><path d="M7 2h18M7 10h18M7 18h18"/><circle cx="1.500" cy="2" r=".800"/><circle cx="1.500" cy="10" r=".800"/><circle cx="1.500" cy="18" r=".800"/></svg><svg style="left:27px;top:517px" width="22" height="22" viewBox="0 0 26 26" stroke="#1a1a1a" stroke-width="1.700" fill="none" stroke-linecap="round" stroke-linejoin="round"><path d="M9 5a3 3 0 1 1 6 0v1h4a2 2 0 0 1 2 2v4h1a3 3 0 1 1 0 6h-1v3a2 2 0 0 1-2 2h-4v-1a3 3 0 1 0-6 0v1H6a2 2 0 0 1-2-2v-4H3a3 3 0 1 1 0-6h1V8a2 2 0 0 1 2-2h3z" transform="scale(.92) translate(1,1)"/></svg><svg style="left:26px;top:1218px" width="23" height="23" viewBox="0 0 26 26" stroke="#1a1a1a" stroke-width="1.700" fill="none" stroke-linecap="round" stroke-linejoin="round"><circle cx="13" cy="13" r="3.500"/><path d="M11 1.500h4l.7 3.200 2.300 1.300 3.100-1 2 3.500-2.400 2.200v2.600l2.400 2.200-2 3.500-3.100-1-2.300 1.300-.7 3.200h-4l-.7-3.200-2.300-1.300-3.100 1-2-3.500 2.400-2.200v-2.600L2.900 8.500l2-3.500 3.100 1 2.300-1.300z"/></svg><div id="tmc"><div class="t" style="left:24px;top:25px;font-size:22px">进程</div><svg style="left:1033px;top:25px" width="26" height="24" viewBox="0 0 26 24" fill="none" stroke="#1a1a1a" stroke-width="1.600"><path d="M4 1h14a3 3 0 0 1 3 3v7M1 4a3 3 0 0 1 3-3v19h7M1 4v13a3 3 0 0 0 3 3M4 1h5v19M9 9h12M1 11h8" stroke-linejoin="round"/><circle cx="19" cy="18" r="6" fill="#1a1a1a" stroke="none"/><path d="M19 15v6M16 18h6" stroke="#fff" stroke-width="1.500"/></svg><div class="t" style="left:1068px;top:27px;font-size:18px">运行新任务</div><div class="abs" style="left:1179px;top:11px;width:2px;height:48px;background:#e8e8e8"></div><svg style="left:1201px;top:25px" width="24" height="24" viewBox="0 0 24 24" fill="none" stroke="#1a1a1a" stroke-width="1.600"><circle cx="12" cy="12" r="10"/><path d="M5 19L19 5"/></svg><div class="t" style="left:1237px;top:27px;font-size:18px">结束任务</div><svg style="left:1345px;top:24px" width="26" height="24" viewBox="0 0 26 24" fill="none" stroke="#b0b0b0" stroke-width="1.700" stroke-linejoin="round"><path d="M12 12.500C7 13.500 2.500 10 2 3.500 8.500 2.500 12.500 6 12 12.500z"/><path d="M6 7l8 10"/><path d="M11.500 20.500c-1-7 3-12 12-12.500 1 7-3 13-12 12.500z"/><path d="M8.500 23c3-5 6-8 11-11"/></svg><div class="t" style="left:1381px;top:27px;font-size:18px;color:#a8a8a8 !important">效率模式</div><div class="abs" style="left:1494px;top:34px;width:5px;height:5px;border-radius:3px;background:#1a1a1a;box-shadow:9px 0 #1a1a1a,18px 0 #1a1a1a"></div><div class="abs" style="left:0;top:67px;width:1544px;height:1px;background:#efefef"></div><div class="abs" style="left:0;top:144px;width:1520px;height:2px;background:#e9e9e9"></div><div class="vl" style="left:349px"></div><div class="vl" style="left:528.5999999999999px"></div><div class="vl" style="left:638px"></div><div class="vl" style="left:830px"></div><div class="vl" style="left:939px"></div><div class="vl" style="left:1048.5px"></div><svg style="left:160px;top:80px" width="14" height="8" viewBox="0 0 14 8" fill="none" stroke="#3a3a3a" stroke-width="1.500"><path d="M1 7l6-5.500L13 7"/></svg><div class="t" style="left:23px;top:117px;font-size:18px;color:#5f5f5f !important">名称</div><div class="t" style="left:361px;top:117px;font-size:18px;color:#5f5f5f !important">状态</div><div class="t" style="right:914.5px;top:82px;font-size:24.500px">13%</div><div class="t" style="right:914.5px;top:117px;font-size:18px;color:#5f5f5f !important">CPU</div><div class="t" style="right:722.5px;top:82px;font-size:24.500px">95%</div><div class="t" style="right:722.5px;top:117px;font-size:18px;color:#5f5f5f !important">内存</div><div class="t" style="right:613.5px;top:82px;font-size:24.500px">2%</div><div class="t" style="right:613.5px;top:117px;font-size:18px;color:#5f5f5f !important">磁盘</div><div class="t" style="right:504.5px;top:82px;font-size:24.500px">0%</div><div class="t" style="right:504.5px;top:117px;font-size:18px;color:#5f5f5f !important">网络</div><div class="t" style="left:25px;top:165px;font-size:24px">应用 (7)</div><div class="t" style="left:25px;top:515px;font-size:24px">后台进程 (59)</div><div class="cell" style="left:529.5999999999999px;top:203px;width:109.40000000000009px;background:#9fdbff"></div><div class="cell" style="left:639px;top:203px;width:192px;background:#0e8eee"></div><div class="cell" style="left:831px;top:203px;width:109px;background:#a9dcfd"></div><div class="cell" style="left:940px;top:203px;width:108.5px;background:#d6effd"></div><svg class="chev" style="top:216px" width="9" height="15" viewBox="0 0 9 15" fill="none" stroke="#6e6e6e" stroke-width="1.500"><path d="M1.500 1.500L7.500 7.500l-6 6"/></svg><div class="abs" style="left:54px;top:212px;width:24px;height:24px"><div class="abs" style="left:1px;top:2px;width:22px;height:21px;border-radius:5px;background:#0a1e3c"></div><div class="t" style="left:4.500px;top:6px;font-size:12.500px;font-weight:bold;color:#3ea6ff !important">Ps</div></div><div class="nm" style="top:203px">Adobe Photoshop 2024</div><div class="st" style="top:203px;font-size:18px">无响应</div><div class="num" style="right:914.5px;top:203px">7.9%</div><div class="num" style="right:722.5px;top:203px">19,189.2 MB</div><div class="num" style="right:613.5px;top:203px">41.2 MB...</div><div class="num" style="right:504.5px;top:203px">0 Mbps</div><div class="cell" style="left:529.5999999999999px;top:245px;width:109.40000000000009px;background:#d6effd"></div><div class="cell" style="left:639px;top:245px;width:192px;background:#d6effd"></div><div class="cell" style="left:831px;top:245px;width:109px;background:#d6effd"></div><div class="cell" style="left:940px;top:245px;width:108.5px;background:#d6effd"></div><svg class="chev" style="top:258px" width="9" height="15" viewBox="0 0 9 15" fill="none" stroke="#6e6e6e" stroke-width="1.500"><path d="M1.500 1.500L7.500 7.500l-6 6"/></svg><div class="abs" style="left:54px;top:254px;width:24px;height:24px"><div class="abs" style="left:0;top:0;width:24px;height:24px;background:#cf1235"></div><svg style="left:4px;top:4px" width="16" height="16" viewBox="0 0 16 16"><path d="M3 2h11v11l-3-3V5H6z" fill="#fff"/><path d="M2 9l4-4v6h6l-4 4H2z" fill="#fff"/></svg></div><div class="nm" style="top:245px">AMD Software: Host Applic...</div><div class="num" style="right:914.5px;top:245px">0.4%</div><div class="num" style="right:722.5px;top:245px">253.8 MB</div><div class="num" style="right:613.5px;top:245px">0 MB/<span style="font-size:.94em">秒</span></div><div class="num" style="right:504.5px;top:245px">0 Mbps</div><div class="abs" style="left:0;top:287px;width:530px;height:42px;background:#f5f5f5"></div><div class="abs" style="left:349px;top:287px;width:2px;height:42px;background:#eaeaea"></div><div class="cell" style="left:529.5999999999999px;top:287px;width:109.40000000000009px;background:#cde6f6"></div><div class="cell" style="left:639px;top:287px;width:192px;background:#cde6f6"></div><div class="cell" style="left:831px;top:287px;width:109px;background:#cde6f6"></div><div class="cell" style="left:940px;top:287px;width:108.5px;background:#cde6f6"></div><svg class="chev" style="top:300px" width="9" height="15" viewBox="0 0 9 15" fill="none" stroke="#6e6e6e" stroke-width="1.500"><path d="M1.500 1.500L7.500 7.500l-6 6"/></svg><div class="abs" style="left:54px;top:296px;width:24px;height:24px"><svg style="left:0;top:0" width="24" height="24" viewBox="0 0 24 24"><circle cx="12" cy="12" r="12" fill="#fbbc04"/><path d="M12 12L1.600 6A12 12 0 0 1 22.400 6z" fill="#ea4335"/><path d="M12 12L1.600 6A12 12 0 0 0 12 24z" fill="#34a853"/><path d="M12 12h10.400A12 12 0 0 0 22.400 6H12z" fill="#ea4335"/><circle cx="12" cy="12" r="5.600" fill="#fff"/><circle cx="12" cy="12" r="4.400" fill="#4285f4"/></svg></div><div class="nm" style="top:287px">Google Chrome (18)</div><div class="st" style="top:287px;font-size:18px">效能模式</div><svg style="left:488px;top:296px" width="26" height="24" viewBox="0 0 26 24" fill="none" stroke="#2e7d32" stroke-width="1.700" stroke-linejoin="round"><path d="M12 12.500C7 13.500 2.500 10 2 3.500 8.500 2.500 12.500 6 12 12.500z"/><path d="M6 7l8 10"/><path d="M11.500 20.500c-1-7 3-12 12-12.500 1 7-3 13-12 12.500z"/><path d="M8.500 23c3-5 6-8 11-11"/></svg><div class="num" style="right:914.5px;top:287px">0.1%</div><div class="num" style="right:722.5px;top:287px">423.4 MB</div><div class="num" style="right:613.5px;top:287px">7.1 MB/<span style="font-size:.94em">秒</span></div><div class="num" style="right:504.5px;top:287px">0 Mbps</div><div class="cell" style="left:529.5999999999999px;top:329px;width:109.40000000000009px;background:#d6effd"></div><div class="cell" style="left:639px;top:329px;width:192px;background:#d6effd"></div><div class="cell" style="left:831px;top:329px;width:109px;background:#d6effd"></div><div class="cell" style="left:940px;top:329px;width:108.5px;background:#d6effd"></div><svg class="chev" style="top:342px" width="9" height="15" viewBox="0 0 9 15" fill="none" stroke="#6e6e6e" stroke-width="1.500"><path d="M1.500 1.500L7.500 7.500l-6 6"/></svg><div class="abs" style="left:54px;top:338px;width:24px;height:24px"><svg style="left:2px;top:0" width="20" height="24" viewBox="0 0 20 24"><ellipse cx="10" cy="15" rx="7.500" ry="8" fill="#111"/><ellipse cx="10" cy="7" rx="5.500" ry="6" fill="#111"/><ellipse cx="10" cy="17" rx="4.500" ry="5" fill="#fff"/><path d="M3 12c4 3 10 3 14 0l-1 3c-4 2-8 2-12 0z" fill="#e02020"/><ellipse cx="8" cy="6" rx="1.300" ry="2" fill="#fff"/><ellipse cx="12" cy="6" rx="1.300" ry="2" fill="#fff"/><ellipse cx="10" cy="10" rx="3" ry="1.200" fill="#f5a623"/><ellipse cx="5" cy="22.500" rx="3.500" ry="1.500" fill="#f5a623"/><ellipse cx="15" cy="22.500" rx="3.500" ry="1.500" fill="#f5a623"/></svg></div><div class="nm" style="top:329px">QQ (5)</div><div class="num" style="right:914.5px;top:329px">0.1%</div><div class="num" style="right:722.5px;top:329px">182.4 MB</div><div class="num" style="right:613.5px;top:329px">0 MB/<span style="font-size:.94em">秒</span></div><div class="num" style="right:504.5px;top:329px">0 Mbps</div><div class="cell" style="left:529.5999999999999px;top:371px;width:109.40000000000009px;background:#d6effd"></div><div class="cell" style="left:639px;top:371px;width:192px;background:#d6effd"></div><div class="cell" style="left:831px;top:371px;width:109px;background:#d6effd"></div><div class="cell" style="left:940px;top:371px;width:108.5px;background:#d6effd"></div><svg class="chev" style="top:384px" width="9" height="15" viewBox="0 0 9 15" fill="none" stroke="#6e6e6e" stroke-width="1.500"><path d="M1.500 1.500L7.500 7.500l-6 6"/></svg><div class="abs" style="left:54px;top:380px;width:24px;height:24px"><svg style="left:0;top:1px" width="24" height="22" viewBox="0 0 24 22"><path d="M0 2a1 1 0 0 1 1-1h7l3 3h12a1 1 0 0 1 1 1v16H0z" fill="#e8a317"/><rect x="0" y="5" width="24" height="16" rx="1" fill="#ffd04f"/><rect x="5" y="15" width="14" height="6" rx="1.500" fill="#2d7cd6"/></svg></div><div class="nm" style="top:371px">Windows <span style="font-size:.94em">资源管理器</span></div><div class="num" style="right:914.5px;top:371px">0%</div><div class="num" style="right:722.5px;top:371px">3.9 MB</div><div class="num" style="right:613.5px;top:371px">0 MB/<span style="font-size:.94em">秒</span></div><div class="num" style="right:504.5px;top:371px">0 Mbps</div><div class="cell" style="left:529.5999999999999px;top:413px;width:109.40000000000009px;background:#d6effd"></div><div class="cell" style="left:639px;top:413px;width:192px;background:#d6effd"></div><div class="cell" style="left:831px;top:413px;width:109px;background:#d6effd"></div><div class="cell" style="left:940px;top:413px;width:108.5px;background:#d6effd"></div><svg class="chev" style="top:426px" width="9" height="15" viewBox="0 0 9 15" fill="none" stroke="#6e6e6e" stroke-width="1.500"><path d="M1.500 1.500L7.500 7.500l-6 6"/></svg><div class="abs" style="left:54px;top:422px;width:24px;height:24px"><svg style="left:0;top:1px" width="24" height="22" viewBox="0 0 24 22"><path d="M0 2a1 1 0 0 1 1-1h7l3 3h12a1 1 0 0 1 1 1v16H0z" fill="#e8a317"/><rect x="0" y="5" width="24" height="16" rx="1" fill="#ffd04f"/><rect x="5" y="15" width="14" height="6" rx="1.500" fill="#2d7cd6"/></svg></div><div class="nm" style="top:413px">Windows <span style="font-size:.94em">资源管理器</span> (4)</div><div class="num" style="right:914.5px;top:413px">0.1%</div><div class="num" style="right:722.5px;top:413px">127.1 MB</div><div class="num" style="right:613.5px;top:413px">0.1 MB/<span style="font-size:.94em">秒</span></div><div class="num" style="right:504.5px;top:413px">0 Mbps</div><div class="cell" style="left:529.5999999999999px;top:455px;width:109.40000000000009px;background:#d6effd"></div><div class="cell" style="left:639px;top:455px;width:192px;background:#d6effd"></div><div class="cell" style="left:831px;top:455px;width:109px;background:#d6effd"></div><div class="cell" style="left:940px;top:455px;width:108.5px;background:#d6effd"></div><svg class="chev" style="top:468px" width="9" height="15" viewBox="0 0 9 15" fill="none" stroke="#6e6e6e" stroke-width="1.500"><path d="M1.500 1.500L7.500 7.500l-6 6"/></svg><div class="abs" style="left:54px;top:464px;width:24px;height:24px"><svg style="left:0;top:2px" width="24" height="20" viewBox="0 0 24 20"><rect width="24" height="18" rx="2" fill="#1f7fd6"/><path d="M0 14l4-5 2 3 3-7 3 8 3-6 3 5 3-4 3 4v5H0z" fill="#8fd4ff"/><rect y="14" width="24" height="4" fill="#bfe6ff"/></svg></div><div class="nm" style="top:455px"><span style="font-size:.94em">任务管理器</span></div><div class="num" style="right:914.5px;top:455px">0.5%</div><div class="num" style="right:722.5px;top:455px">49.3 MB</div><div class="num" style="right:613.5px;top:455px">0 MB/<span style="font-size:.94em">秒</span></div><div class="num" style="right:504.5px;top:455px">0 Mbps</div><div class="cell" style="left:529.5999999999999px;top:553px;width:109.40000000000009px;background:#d6effd"></div><div class="cell" style="left:639px;top:553px;width:192px;background:#d6effd"></div><div class="cell" style="left:831px;top:553px;width:109px;background:#d6effd"></div><div class="cell" style="left:940px;top:553px;width:108.5px;background:#d6effd"></div><div class="abs" style="left:54px;top:562px;width:24px;height:24px"><svg style="left:0;top:3px" width="24" height="19" viewBox="0 0 24 19"><rect x=".500" y=".500" width="23" height="17" fill="#fff" stroke="#8a8f98"/><rect x=".500" y=".500" width="23" height="2.500" fill="#c9ced6"/><rect x="7" y="5" width="10" height="10" fill="#1e7fd8"/><path d="M2.500 5.500h3M2.500 8.500h3M2.500 11.500h3M2.500 14.500h3M18.500 5.500h3M18.500 8.500h3M18.500 11.500h3" stroke="#7a7f88" stroke-width="1"/></svg></div><div class="nm" style="top:553px">Adobe Crash Processor</div><div class="num" style="right:914.5px;top:553px">0%</div><div class="num" style="right:722.5px;top:553px">1.5 MB</div><div class="num" style="right:613.5px;top:553px">0 MB/<span style="font-size:.94em">秒</span></div><div class="num" style="right:504.5px;top:553px">0 Mbps</div><div class="cell" style="left:529.5999999999999px;top:595px;width:109.40000000000009px;background:#d6effd"></div><div class="cell" style="left:639px;top:595px;width:192px;background:#d6effd"></div><div class="cell" style="left:831px;top:595px;width:109px;background:#d6effd"></div><div class="cell" style="left:940px;top:595px;width:108.5px;background:#d6effd"></div><svg class="chev" style="top:608px" width="9" height="15" viewBox="0 0 9 15" fill="none" stroke="#6e6e6e" stroke-width="1.500"><path d="M1.500 1.500L7.500 7.500l-6 6"/></svg><div class="abs" style="left:54px;top:604px;width:24px;height:24px"><svg style="left:0;top:3px" width="24" height="19" viewBox="0 0 24 19"><rect x=".500" y=".500" width="23" height="17" fill="#fff" stroke="#8a8f98"/><rect x=".500" y=".500" width="23" height="2.500" fill="#c9ced6"/><rect x="7" y="5" width="10" height="10" fill="#1e7fd8"/><path d="M2.500 5.500h3M2.500 8.500h3M2.500 11.500h3M2.500 14.500h3M18.500 5.500h3M18.500 8.500h3M18.500 11.500h3" stroke="#7a7f88" stroke-width="1"/></svg></div><div class="nm" style="top:595px">AMD Crash Defender Service</div><div class="num" style="right:914.5px;top:595px">0%</div><div class="num" style="right:722.5px;top:595px">0.1 MB</div><div class="num" style="right:613.5px;top:595px">0 MB/<span style="font-size:.94em">秒</span></div><div class="num" style="right:504.5px;top:595px">0 Mbps</div><div class="cell" style="left:529.5999999999999px;top:637px;width:109.40000000000009px;background:#d6effd"></div><div class="cell" style="left:639px;top:637px;width:192px;background:#d6effd"></div><div class="cell" style="left:831px;top:637px;width:109px;background:#d6effd"></div><div class="cell" style="left:940px;top:637px;width:108.5px;background:#d6effd"></div><div class="abs" style="left:54px;top:646px;width:24px;height:24px"><div class="abs" style="left:0;top:0;width:24px;height:24px;background:#cf1235"></div><svg style="left:4px;top:4px" width="16" height="16" viewBox="0 0 16 16"><path d="M3 2h11v11l-3-3V5H6z" fill="#fff"/><path d="M2 9l4-4v6h6l-4 4H2z" fill="#fff"/></svg></div><div class="nm" style="top:637px">AMD External Events Client ...</div><div class="num" style="right:914.5px;top:637px">0.1%</div><div class="num" style="right:722.5px;top:637px">1.3 MB</div><div class="num" style="right:613.5px;top:637px">0 MB/<span style="font-size:.94em">秒</span></div><div class="num" style="right:504.5px;top:637px">0 Mbps</div><div class="cell" style="left:529.5999999999999px;top:679px;width:109.40000000000009px;background:#d6effd"></div><div class="cell" style="left:639px;top:679px;width:192px;background:#d6effd"></div><div class="cell" style="left:831px;top:679px;width:109px;background:#d6effd"></div><div class="cell" style="left:940px;top:679px;width:108.5px;background:#d6effd"></div><svg class="chev" style="top:692px" width="9" height="15" viewBox="0 0 9 15" fill="none" stroke="#6e6e6e" stroke-width="1.500"><path d="M1.500 1.500L7.500 7.500l-6 6"/></svg><div class="abs" style="left:54px;top:688px;width:24px;height:24px"><svg style="left:0;top:3px" width="24" height="19" viewBox="0 0 24 19"><rect x=".500" y=".500" width="23" height="17" fill="#fff" stroke="#8a8f98"/><rect x=".500" y=".500" width="23" height="2.500" fill="#c9ced6"/><rect x="7" y="5" width="10" height="10" fill="#1e7fd8"/><path d="M2.500 5.500h3M2.500 8.500h3M2.500 11.500h3M2.500 14.500h3M18.500 5.500h3M18.500 8.500h3M18.500 11.500h3" stroke="#7a7f88" stroke-width="1"/></svg></div><div class="nm" style="top:679px">AMD External Events Servic...</div><div class="num" style="right:914.5px;top:679px">0%</div><div class="num" style="right:722.5px;top:679px">0.4 MB</div><div class="num" style="right:613.5px;top:679px">0 MB/<span style="font-size:.94em">秒</span></div><div class="num" style="right:504.5px;top:679px">0 Mbps</div><div class="cell" style="left:529.5999999999999px;top:721px;width:109.40000000000009px;background:#d6effd"></div><div class="cell" style="left:639px;top:721px;width:192px;background:#d6effd"></div><div class="cell" style="left:831px;top:721px;width:109px;background:#d6effd"></div><div class="cell" style="left:940px;top:721px;width:108.5px;background:#d6effd"></div><div class="abs" style="left:54px;top:730px;width:24px;height:24px"><div class="abs" style="left:0;top:0;width:24px;height:24px;background:#cf1235"></div><svg style="left:4px;top:4px" width="16" height="16" viewBox="0 0 16 16"><path d="M3 2h11v11l-3-3V5H6z" fill="#fff"/><path d="M2 9l4-4v6h6l-4 4H2z" fill="#fff"/></svg></div><div class="nm" style="top:721px">AMD Game Configuration S...</div><div class="num" style="right:914.5px;top:721px">0%</div><div class="num" style="right:722.5px;top:721px">0.8 MB</div><div class="num" style="right:613.5px;top:721px">0 MB/<span style="font-size:.94em">秒</span></div><div class="num" style="right:504.5px;top:721px">0 Mbps</div><div class="cell" style="left:529.5999999999999px;top:763px;width:109.40000000000009px;background:#d6effd"></div><div class="cell" style="left:639px;top:763px;width:192px;background:#d6effd"></div><div class="cell" style="left:831px;top:763px;width:109px;background:#d6effd"></div><div class="cell" style="left:940px;top:763px;width:108.5px;background:#d6effd"></div><div class="abs" style="left:54px;top:772px;width:24px;height:24px"><svg style="left:0;top:3px" width="24" height="19" viewBox="0 0 24 19"><rect x=".500" y=".500" width="23" height="17" fill="#fff" stroke="#8a8f98"/><rect x=".500" y=".500" width="23" height="2.500" fill="#c9ced6"/><rect x="7" y="5" width="10" height="10" fill="#1e7fd8"/><path d="M2.500 5.500h3M2.500 8.500h3M2.500 11.500h3M2.500 14.500h3M18.500 5.500h3M18.500 8.500h3M18.500 11.500h3" stroke="#7a7f88" stroke-width="1"/></svg></div><div class="nm" style="top:763px">AMD Software Command Li...</div><div class="num" style="right:914.5px;top:763px">0%</div><div class="num" style="right:722.5px;top:763px">0.1 MB</div><div class="num" style="right:613.5px;top:763px">0 MB/<span style="font-size:.94em">秒</span></div><div class="num" style="right:504.5px;top:763px">0 Mbps</div><div class="cell" style="left:529.5999999999999px;top:805px;width:109.40000000000009px;background:#d6effd"></div><div class="cell" style="left:639px;top:805px;width:192px;background:#d6effd"></div><div class="cell" style="left:831px;top:805px;width:109px;background:#d6effd"></div><div class="cell" style="left:940px;top:805px;width:108.5px;background:#d6effd"></div><div class="abs" style="left:54px;top:814px;width:24px;height:24px"><svg style="left:3px;top:1px" width="18" height="22" viewBox="0 0 18 22" fill="none" stroke="#3a3a3a" stroke-width="2.200"><rect x="1.500" y="8" width="15" height="12.500"/><path d="M9 8v12.500M1.500 14h15M4 3l5 4 5-4M6 1l3 6 3-6"/></svg></div><div class="nm" style="top:805px">AMD User Experience Progr...</div><div class="num" style="right:914.5px;top:805px">0%</div><div class="num" style="right:722.5px;top:805px">0.9 MB</div><div class="num" style="right:613.5px;top:805px">0 MB/<span style="font-size:.94em">秒</span></div><div class="num" style="right:504.5px;top:805px">0 Mbps</div><div class="cell" style="left:529.5999999999999px;top:847px;width:109.40000000000009px;background:#d6effd"></div><div class="cell" style="left:639px;top:847px;width:192px;background:#d6effd"></div><div class="cell" style="left:831px;top:847px;width:109px;background:#d6effd"></div><div class="cell" style="left:940px;top:847px;width:108.5px;background:#d6effd"></div><svg class="chev" style="top:860px" width="9" height="15" viewBox="0 0 9 15" fill="none" stroke="#6e6e6e" stroke-width="1.500"><path d="M1.500 1.500L7.500 7.500l-6 6"/></svg><div class="abs" style="left:54px;top:856px;width:24px;height:24px"><svg style="left:3px;top:1px" width="18" height="22" viewBox="0 0 18 22" fill="none" stroke="#3a3a3a" stroke-width="2.200"><rect x="1.500" y="8" width="15" height="12.500"/><path d="M9 8v12.500M1.500 14h15M4 3l5 4 5-4M6 1l3 6 3-6"/></svg></div><div class="nm" style="top:847px">AMD User Experience Progr...</div><div class="num" style="right:914.5px;top:847px">0%</div><div class="num" style="right:722.5px;top:847px">0.3 MB</div><div class="num" style="right:613.5px;top:847px">0 MB/<span style="font-size:.94em">秒</span></div><div class="num" style="right:504.5px;top:847px">0 Mbps</div><div class="cell" style="left:529.5999999999999px;top:889px;width:109.40000000000009px;background:#d6effd"></div><div class="cell" style="left:639px;top:889px;width:192px;background:#d6effd"></div><div class="cell" style="left:831px;top:889px;width:109px;background:#d6effd"></div><div class="cell" style="left:940px;top:889px;width:108.5px;background:#d6effd"></div><svg class="chev" style="top:902px" width="9" height="15" viewBox="0 0 9 15" fill="none" stroke="#6e6e6e" stroke-width="1.500"><path d="M1.500 1.500L7.500 7.500l-6 6"/></svg><div class="abs" style="left:54px;top:898px;width:24px;height:24px"><svg style="left:0;top:3px" width="24" height="19" viewBox="0 0 24 19"><rect x=".500" y=".500" width="23" height="17" fill="#fff" stroke="#8a8f98"/><rect x=".500" y=".500" width="23" height="2.500" fill="#c9ced6"/><rect x="7" y="5" width="10" height="10" fill="#1e7fd8"/><path d="M2.500 5.500h3M2.500 8.500h3M2.500 11.500h3M2.500 14.500h3M18.500 5.500h3M18.500 8.500h3M18.500 11.500h3" stroke="#7a7f88" stroke-width="1"/></svg></div><div class="nm" style="top:889px">Antimalware Core Service</div><div class="num" style="right:914.5px;top:889px">0%</div><div class="num" style="right:722.5px;top:889px">3.8 MB</div><div class="num" style="right:613.5px;top:889px">0 MB/<span style="font-size:.94em">秒</span></div><div class="num" style="right:504.5px;top:889px">0 Mbps</div><div class="cell" style="left:529.5999999999999px;top:931px;width:109.40000000000009px;background:#d6effd"></div><div class="cell" style="left:639px;top:931px;width:192px;background:#d6effd"></div><div class="cell" style="left:831px;top:931px;width:109px;background:#d6effd"></div><div class="cell" style="left:940px;top:931px;width:108.5px;background:#d6effd"></div><svg class="chev" style="top:944px" width="9" height="15" viewBox="0 0 9 15" fill="none" stroke="#6e6e6e" stroke-width="1.500"><path d="M1.500 1.500L7.500 7.500l-6 6"/></svg><div class="abs" style="left:54px;top:940px;width:24px;height:24px"><svg style="left:0;top:3px" width="24" height="19" viewBox="0 0 24 19"><rect x=".500" y=".500" width="23" height="17" fill="#fff" stroke="#8a8f98"/><rect x=".500" y=".500" width="23" height="2.500" fill="#c9ced6"/><rect x="7" y="5" width="10" height="10" fill="#1e7fd8"/><path d="M2.500 5.500h3M2.500 8.500h3M2.500 11.500h3M2.500 14.500h3M18.500 5.500h3M18.500 8.500h3M18.500 11.500h3" stroke="#7a7f88" stroke-width="1"/></svg></div><div class="nm" style="top:931px">Antimalware Service Execut...</div><div class="st" style="top:931px;font-size:18px">效能模式</div><div class="num" style="right:914.5px;top:931px">0%</div><div class="num" style="right:722.5px;top:931px">129.5 MB</div><div class="num" style="right:613.5px;top:931px">0 MB/<span style="font-size:.94em">秒</span></div><div class="num" style="right:504.5px;top:931px">0 Mbps</div><div class="cell" style="left:529.5999999999999px;top:973px;width:109.40000000000009px;background:#d6effd"></div><div class="cell" style="left:639px;top:973px;width:192px;background:#d6effd"></div><div class="cell" style="left:831px;top:973px;width:109px;background:#d6effd"></div><div class="cell" style="left:940px;top:973px;width:108.5px;background:#d6effd"></div><div class="abs" style="left:54px;top:982px;width:24px;height:24px"><svg style="left:0;top:3px" width="24" height="19" viewBox="0 0 24 19"><rect x=".500" y=".500" width="23" height="17" fill="#fff" stroke="#8a8f98"/><rect x=".500" y=".500" width="23" height="2.500" fill="#c9ced6"/><rect x="7" y="5" width="10" height="10" fill="#1e7fd8"/><path d="M2.500 5.500h3M2.500 8.500h3M2.500 11.500h3M2.500 14.500h3M18.500 5.500h3M18.500 8.500h3M18.500 11.500h3" stroke="#7a7f88" stroke-width="1"/></svg></div><div class="nm" style="top:973px">Application Frame Host</div><div class="num" style="right:914.5px;top:973px">0%</div><div class="num" style="right:722.5px;top:973px">2.0 MB</div><div class="num" style="right:613.5px;top:973px">0 MB/<span style="font-size:.94em">秒</span></div><div class="num" style="right:504.5px;top:973px">0 Mbps</div><div class="cell" style="left:529.5999999999999px;top:1015px;width:109.40000000000009px;background:#d6effd"></div><div class="cell" style="left:639px;top:1015px;width:192px;background:#d6effd"></div><div class="cell" style="left:831px;top:1015px;width:109px;background:#d6effd"></div><div class="cell" style="left:940px;top:1015px;width:108.5px;background:#d6effd"></div><div class="abs" style="left:54px;top:1024px;width:24px;height:24px"><svg style="left:0;top:3px" width="24" height="19" viewBox="0 0 24 19"><rect x=".500" y=".500" width="23" height="17" fill="#fff" stroke="#8a8f98"/><rect x=".500" y=".500" width="23" height="2.500" fill="#c9ced6"/><rect x="7" y="5" width="10" height="10" fill="#1e7fd8"/><path d="M2.500 5.500h3M2.500 8.500h3M2.500 11.500h3M2.500 14.500h3M18.500 5.500h3M18.500 8.500h3M18.500 11.500h3" stroke="#7a7f88" stroke-width="1"/></svg></div><div class="nm" style="top:1015px">COM Surrogate</div><div class="num" style="right:914.5px;top:1015px">0%</div><div class="num" style="right:722.5px;top:1015px">0.8 MB</div><div class="num" style="right:613.5px;top:1015px">0 MB/<span style="font-size:.94em">秒</span></div><div class="num" style="right:504.5px;top:1015px">0 Mbps</div><div class="cell" style="left:529.5999999999999px;top:1057px;width:109.40000000000009px;background:#d6effd"></div><div class="cell" style="left:639px;top:1057px;width:192px;background:#d6effd"></div><div class="cell" style="left:831px;top:1057px;width:109px;background:#d6effd"></div><div class="cell" style="left:940px;top:1057px;width:108.5px;background:#d6effd"></div><div class="abs" style="left:54px;top:1066px;width:24px;height:24px"><svg style="left:0;top:3px" width="24" height="19" viewBox="0 0 24 19"><rect x=".500" y=".500" width="23" height="17" fill="#fff" stroke="#8a8f98"/><rect x=".500" y=".500" width="23" height="2.500" fill="#c9ced6"/><rect x="7" y="5" width="10" height="10" fill="#1e7fd8"/><path d="M2.500 5.500h3M2.500 8.500h3M2.500 11.500h3M2.500 14.500h3M18.500 5.500h3M18.500 8.500h3M18.500 11.500h3" stroke="#7a7f88" stroke-width="1"/></svg></div><div class="nm" style="top:1057px">COM Surrogate</div><div class="num" style="right:914.5px;top:1057px">0%</div><div class="num" style="right:722.5px;top:1057px">1.9 MB</div><div class="num" style="right:613.5px;top:1057px">0 MB/<span style="font-size:.94em">秒</span></div><div class="num" style="right:504.5px;top:1057px">0 Mbps</div><div class="cell" style="left:529.5999999999999px;top:1099px;width:109.40000000000009px;background:#d6effd"></div><div class="cell" style="left:639px;top:1099px;width:192px;background:#d6effd"></div><div class="cell" style="left:831px;top:1099px;width:109px;background:#d6effd"></div><div class="cell" style="left:940px;top:1099px;width:108.5px;background:#d6effd"></div><div class="abs" style="left:54px;top:1108px;width:24px;height:24px"><svg style="left:1px;top:0" width="24" height="24" viewBox="0 0 24 24"><path d="M5 3l3 4M14 3l-3 4" stroke="#3a2a10" stroke-width="1.500"/><ellipse cx="10" cy="14" rx="7" ry="8.500" fill="#d9a520"/><ellipse cx="10" cy="8" rx="4" ry="3.500" fill="#3a2a10"/><path d="M10 9v13" stroke="#7a5a10" stroke-width="1.200"/><path d="M3 12l-3-1M3 16l-3 1M4 20l-2 2" stroke="#3a2a10" stroke-width="1.300"/><circle cx="17.500" cy="17.500" r="5.500" fill="#e0221e"/><rect x="16.700" y="14" width="1.800" height="4.500" fill="#fff"/><rect x="16.700" y="19.500" width="1.800" height="1.800" fill="#fff"/></svg></div><div class="nm" style="top:1099px">crashpad_handler</div><div class="num" style="right:914.5px;top:1099px">0%</div><div class="num" style="right:722.5px;top:1099px">0.8 MB</div><div class="num" style="right:613.5px;top:1099px">0 MB/<span style="font-size:.94em">秒</span></div><div class="num" style="right:504.5px;top:1099px">0 Mbps</div><div class="cell" style="left:529.5999999999999px;top:1141px;width:109.40000000000009px;background:#d6effd"></div><div class="cell" style="left:639px;top:1141px;width:192px;background:#d6effd"></div><div class="cell" style="left:831px;top:1141px;width:109px;background:#d6effd"></div><div class="cell" style="left:940px;top:1141px;width:108.5px;background:#d6effd"></div><div class="abs" style="left:54px;top:1150px;width:24px;height:24px"><svg style="left:0;top:0" width="24" height="24" viewBox="0 0 24 24"><defs><linearGradient id="ccg" x1="0" y1="0" x2="1" y2="1"><stop offset="0" stop-color="#ff4fa0"/><stop offset=".35" stop-color="#ff3a3a"/><stop offset=".6" stop-color="#ffb020"/><stop offset=".8" stop-color="#38c060"/><stop offset="1" stop-color="#3a70ff"/></linearGradient></defs><rect width="24" height="24" rx="5" fill="url(#ccg)"/><path d="M7 15.500a4 4 0 1 1 3-6.500 4.500 4.500 0 1 1 3.500 7H7.500" fill="none" stroke="#fff" stroke-width="1.800"/></svg></div><div class="nm" style="top:1141px">Creative Cloud Content Ma...</div><div class="num" style="right:914.5px;top:1141px">0%</div><div class="num" style="right:722.5px;top:1141px">0.1 MB</div><div class="num" style="right:613.5px;top:1141px">0 MB/<span style="font-size:.94em">秒</span></div><div class="num" style="right:504.5px;top:1141px">0 Mbps</div><div class="cell" style="left:529.5999999999999px;top:1183px;width:109.40000000000009px;background:#d6effd"></div><div class="cell" style="left:639px;top:1183px;width:192px;background:#d6effd"></div><div class="cell" style="left:831px;top:1183px;width:109px;background:#d6effd"></div><div class="cell" style="left:940px;top:1183px;width:108.5px;background:#d6effd"></div><div class="abs" style="left:638px;top:203px;width:2px;height:294px;background:rgba(120,170,205,.10)"></div><div class="abs" style="left:638px;top:553px;width:2px;height:660px;background:rgba(120,170,205,.10)"></div><div class="abs" style="left:830px;top:203px;width:2px;height:294px;background:rgba(120,170,205,.10)"></div><div class="abs" style="left:830px;top:553px;width:2px;height:660px;background:rgba(120,170,205,.10)"></div><div class="abs" style="left:939px;top:203px;width:2px;height:294px;background:rgba(120,170,205,.10)"></div><div class="abs" style="left:939px;top:553px;width:2px;height:660px;background:rgba(120,170,205,.10)"></div><div class="abs" style="left:1520px;top:146px;width:24px;height:1046px;background:#f1f1f1"></div><div class="abs" style="left:1527px;top:172px;width:9px;height:146px;background:#8a8a8a;border-radius:5px"></div><svg style="left:1526px;top:155px" width="12" height="9" viewBox="0 0 12 9"><path d="M6 1l5.500 7h-11z" fill="#9a9a9a"/></svg><svg style="left:1526px;top:1175px" width="12" height="9" viewBox="0 0 12 9"><path d="M6 8L.500 1h11z" fill="#9a9a9a"/></svg></div></div></body></html>
